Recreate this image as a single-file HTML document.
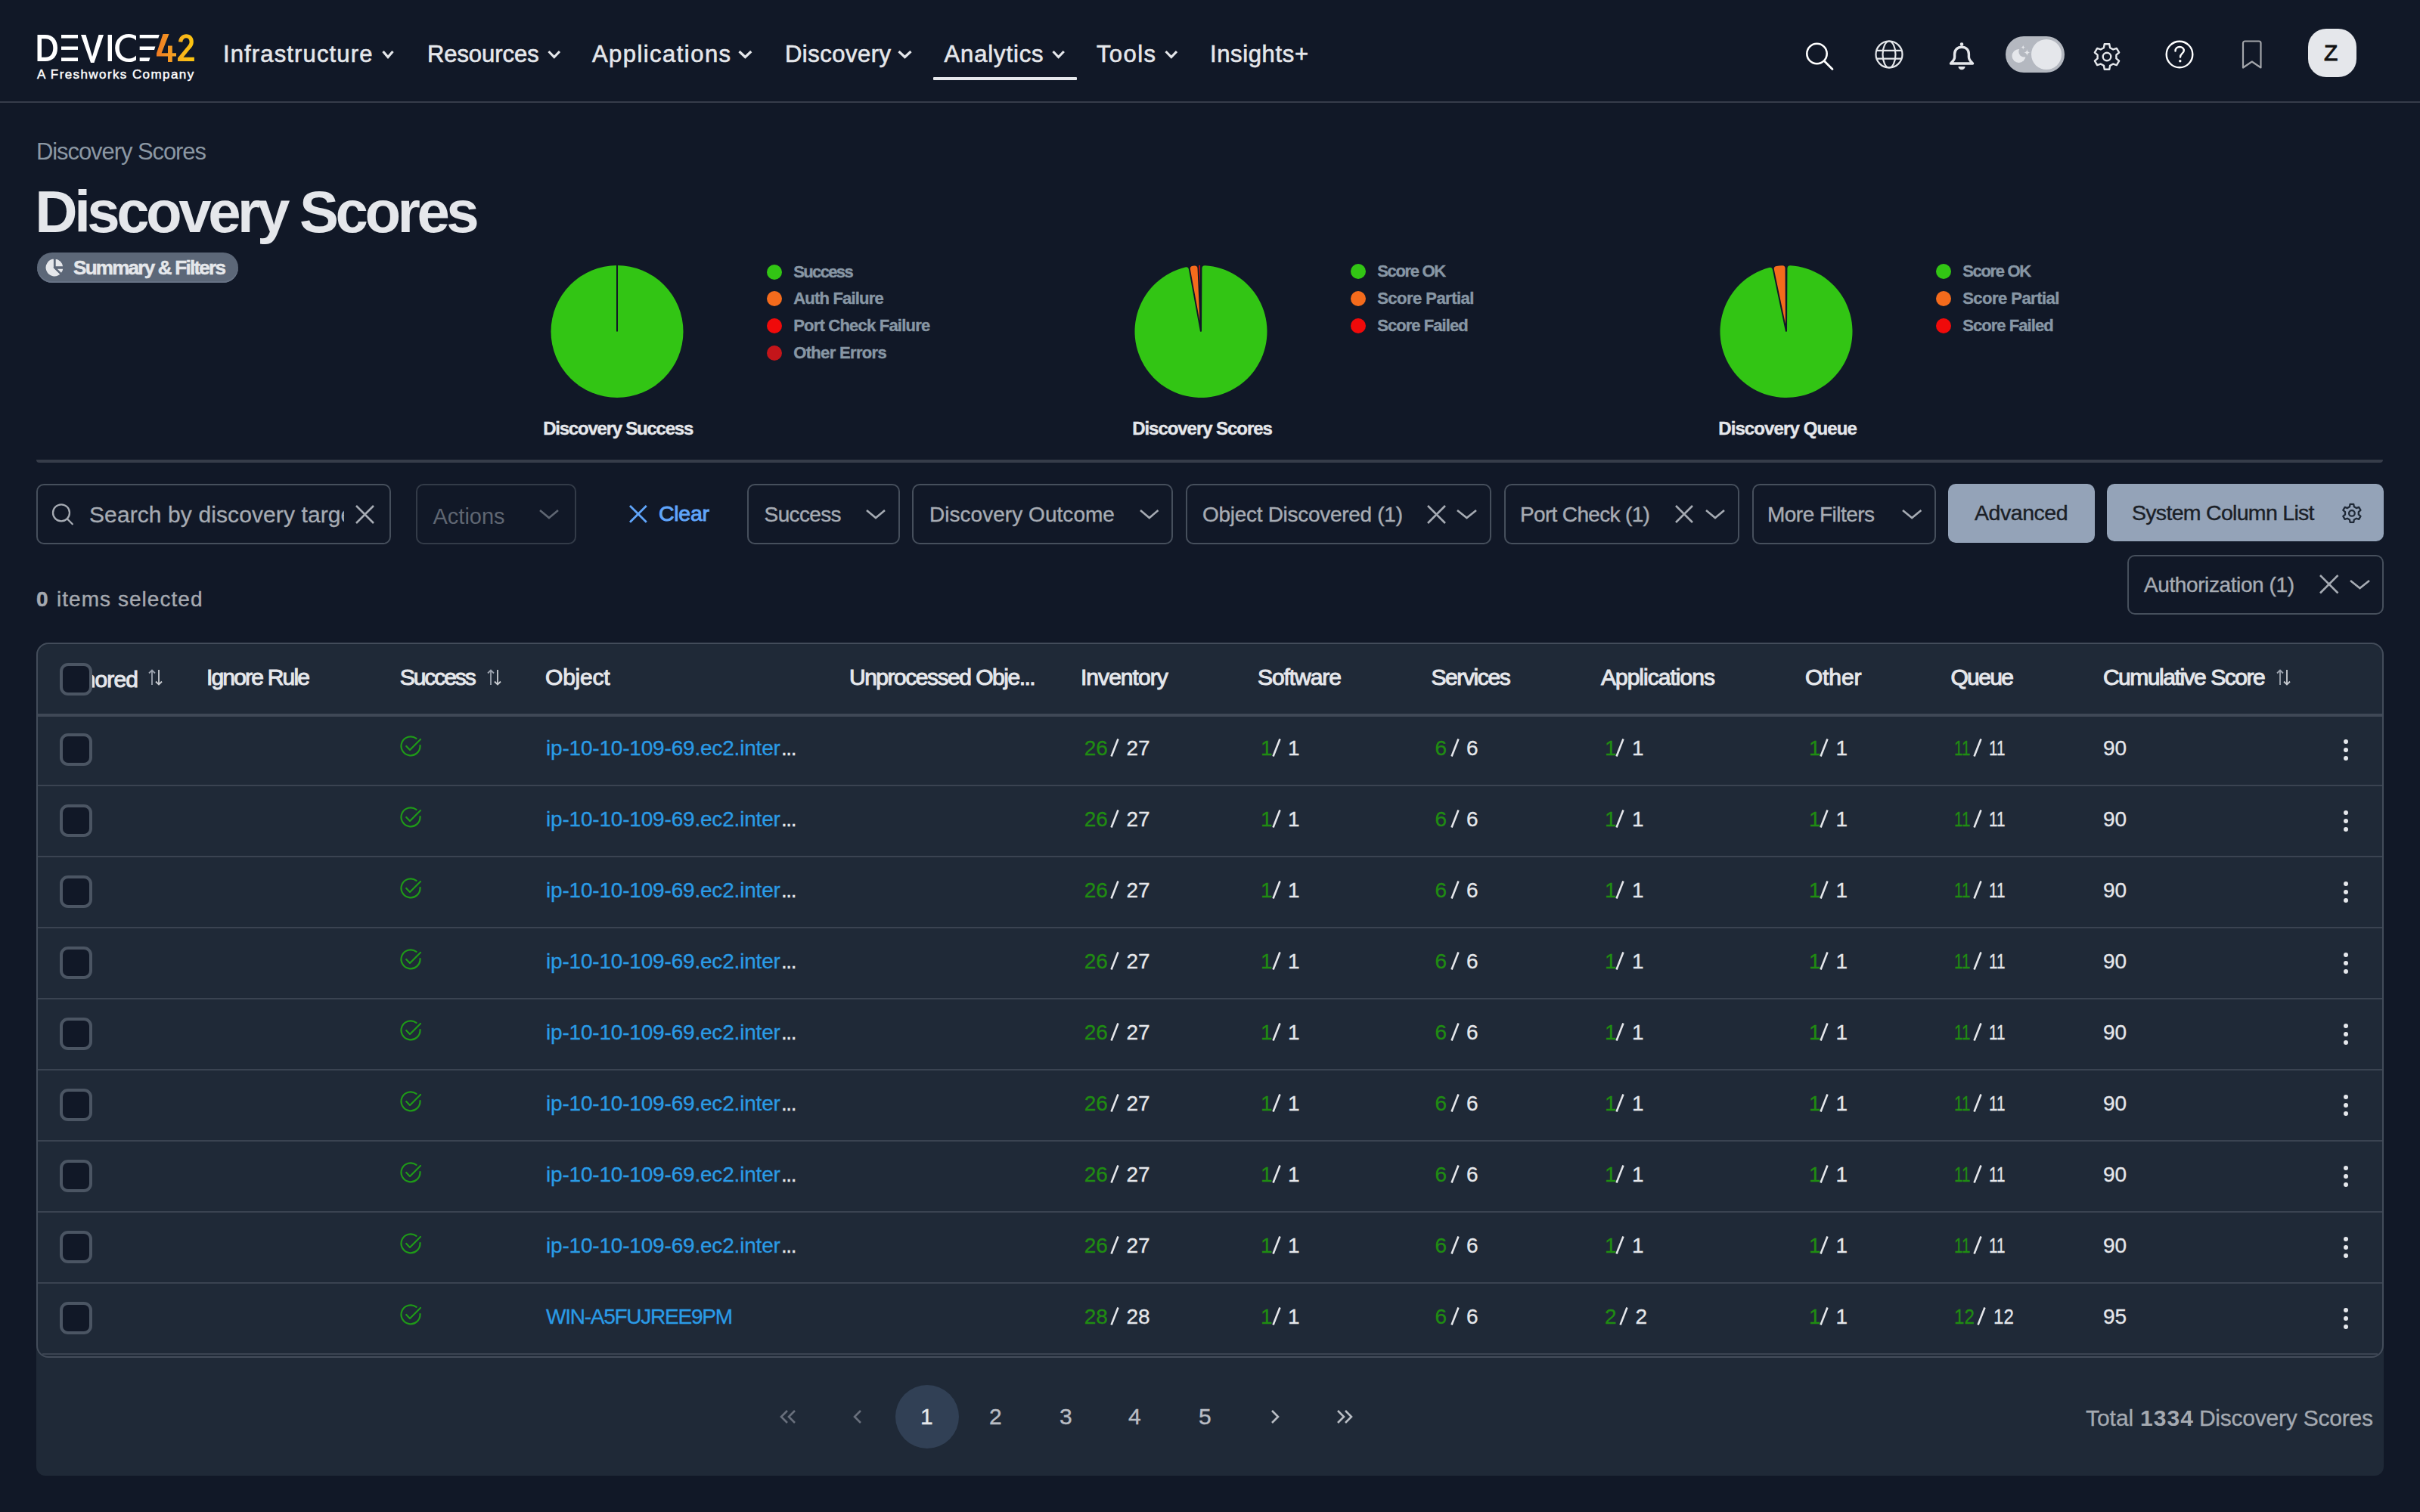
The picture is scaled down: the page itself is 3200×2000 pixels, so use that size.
<!DOCTYPE html>
<html><head><meta charset="utf-8"><style>
html,body{margin:0;padding:0;background:#111827;}
body{width:3200px;height:2000px;position:relative;overflow:hidden;font-family:"Liberation Sans", sans-serif;}
@media (max-width:2400px){html{zoom:0.5;}}
</style></head><body>
<div style="position:absolute;left:0px;top:134px;width:3200px;height:2px;background:#363c4a"></div>
<svg style="position:absolute;left:49px;top:45px;" width="212" height="40" viewBox="0 0 212 40">
<path d="M0.5,1 H11 C21,1 27,7.5 27,18.5 C27,29.5 21,36 11,36 H0.5 Z M6,6.2 V30.8 H11 C17.5,30.8 21.3,26 21.3,18.5 C21.3,11 17.5,6.2 11,6.2 Z" fill="#fff"/>
<rect x="32" y="1" width="22" height="4.6" fill="#fff"/>
<rect x="32" y="16.5" width="22" height="4.4" fill="#fff"/>
<rect x="32" y="31.3" width="22" height="4.7" fill="#fff"/>
<path d="M58,1 H64.5 L73,30 L81.5,1 H88 L75.5,38 H71 Z" fill="#fff"/>
<rect x="93.6" y="1" width="5.4" height="35" fill="#fff"/>
<path d="M131,8.6 C128.5,6 125,4.6 121.5,4.6 C113.5,4.6 108.8,10.6 108.8,18.5 C108.8,26.4 113.5,32.4 121.5,32.4 C125,32.4 128.5,31 131,28.4 V34.4 C128.5,36 125,37 121.5,37 C110.5,37 103.2,29.5 103.2,18.5 C103.2,7.5 110.5,0 121.5,0 C125,0 128.5,1 131,2.6 Z" fill="#fff"/>
<path d="M135.7,1 H161.8 L160.3,5.6 H135.7 Z" fill="#fff"/>
<path d="M135.7,16.5 H156.4 L155,20.9 H135.7 Z" fill="#fff"/>
<path d="M135.7,31.3 H149.5 L148,36 H135.7 Z" fill="#fff"/>
<defs><linearGradient id="lg4" x1="0" y1="0" x2="1" y2="0"><stop offset="0" stop-color="#f07a22"/><stop offset="1" stop-color="#f6a623"/></linearGradient>
<linearGradient id="lg2" x1="0" y1="0" x2="1" y2="0"><stop offset="0" stop-color="#f7ad1f"/><stop offset="1" stop-color="#fcc70f"/></linearGradient></defs>
<path d="M166.5,0 H174.5 L164.6,25.3 H173 V15.5 H178.8 V25.3 H184 V29.6 H178.8 V37 H173 V29.6 H158 V25.6 Z" fill="url(#lg4)"/>
<g transform="translate(186,0) scale(0.9,1) translate(-186.5,0)"><path d="M187.6,10.2 C188.4,4 193,0.3 199,0.3 C205.5,0.3 209.6,4.3 209.6,10.2 C209.6,14.5 207.5,17.5 203.5,21 L194.8,30.8 H210.8 V36 H186.5 V31.8 L199.5,17.6 C202.4,14.6 203.8,12.6 203.8,10.4 C203.8,7.1 201.8,5.3 199,5.3 C196,5.3 193.9,7.3 193.4,10.8 Z" fill="url(#lg2)"/></g>
</svg>
<div style="position:absolute;left:48.9px;top:90.4px;font-size:17px;line-height:17px;font-weight:400;color:#fff;white-space:pre;letter-spacing:1.41px;-webkit-text-stroke:0.45px #fff;">A Freshworks Company</div>
<div style="position:absolute;left:294.9px;top:56.2px;font-size:31px;line-height:31px;font-weight:400;color:#e5e7eb;white-space:pre;letter-spacing:1.15px;-webkit-text-stroke:0.6px #e5e7eb;">Infrastructure</div>
<svg style="position:absolute;left:505px;top:66px;" width="16" height="12" viewBox="0 0 16 12"><path d="M1.5,2 L8.0,9.5 L14.5,2" fill="none" stroke="#e5e7eb" stroke-width="3.2"/></svg>
<div style="position:absolute;left:564.9px;top:56.2px;font-size:31px;line-height:31px;font-weight:400;color:#e5e7eb;white-space:pre;letter-spacing:-0.05px;-webkit-text-stroke:0.6px #e5e7eb;">Resources</div>
<svg style="position:absolute;left:724px;top:66px;" width="17.5" height="12" viewBox="0 0 17.5 12"><path d="M1.5,2 L8.8,9.5 L16.0,2" fill="none" stroke="#e5e7eb" stroke-width="3.2"/></svg>
<div style="position:absolute;left:782.9px;top:56.2px;font-size:31px;line-height:31px;font-weight:400;color:#e5e7eb;white-space:pre;letter-spacing:1.46px;-webkit-text-stroke:0.6px #e5e7eb;">Applications</div>
<svg style="position:absolute;left:976px;top:66px;" width="18.799999999999955" height="12" viewBox="0 0 18.799999999999955 12"><path d="M1.5,2 L9.4,9.5 L17.3,2" fill="none" stroke="#e5e7eb" stroke-width="3.2"/></svg>
<div style="position:absolute;left:1037.9px;top:56.2px;font-size:31px;line-height:31px;font-weight:400;color:#e5e7eb;white-space:pre;letter-spacing:0.51px;-webkit-text-stroke:0.6px #e5e7eb;">Discovery</div>
<svg style="position:absolute;left:1187px;top:66px;" width="19" height="12" viewBox="0 0 19 12"><path d="M1.5,2 L9.5,9.5 L17.5,2" fill="none" stroke="#e5e7eb" stroke-width="3.2"/></svg>
<div style="position:absolute;left:1248.5px;top:56.2px;font-size:31px;line-height:31px;font-weight:400;color:#e5e7eb;white-space:pre;letter-spacing:0.88px;-webkit-text-stroke:0.6px #e5e7eb;">Analytics</div>
<svg style="position:absolute;left:1390.7px;top:66px;" width="17.299999999999955" height="12" viewBox="0 0 17.299999999999955 12"><path d="M1.5,2 L8.6,9.5 L15.8,2" fill="none" stroke="#e5e7eb" stroke-width="3.2"/></svg>
<div style="position:absolute;left:1449.9px;top:56.2px;font-size:31px;line-height:31px;font-weight:400;color:#e5e7eb;white-space:pre;letter-spacing:1.45px;-webkit-text-stroke:0.6px #e5e7eb;">Tools</div>
<svg style="position:absolute;left:1539.5px;top:66px;" width="17.5" height="12" viewBox="0 0 17.5 12"><path d="M1.5,2 L8.8,9.5 L16.0,2" fill="none" stroke="#e5e7eb" stroke-width="3.2"/></svg>
<div style="position:absolute;left:1599.9px;top:56.2px;font-size:31px;line-height:31px;font-weight:400;color:#e5e7eb;white-space:pre;letter-spacing:0.65px;-webkit-text-stroke:0.6px #e5e7eb;">Insights+</div>
<div style="position:absolute;left:1234px;top:102px;width:190px;height:4px;background:#e5e7eb;border-radius:1px"></div>
<svg style="position:absolute;left:2382px;top:50px;" width="48" height="48" viewBox="0 0 48 48"><circle cx="20.5" cy="21" r="13.2" fill="none" stroke="#fff" stroke-width="2.6"/><path d="M30.5,31 L41,41.5" stroke="#fff" stroke-width="2.8" stroke-linecap="round"/></svg>
<svg style="position:absolute;left:2474px;top:48px;" width="48" height="48" viewBox="0 0 48 48"><circle cx="24" cy="24" r="17.5" fill="none" stroke="#e5e7eb" stroke-width="2.2"/><ellipse cx="24" cy="24" rx="8.5" ry="17.5" fill="none" stroke="#e5e7eb" stroke-width="2.2"/><path d="M7,18.8 H41 M7,29.6 H41" stroke="#e5e7eb" stroke-width="2.2"/></svg>
<svg style="position:absolute;left:2574px;top:52px;" width="40" height="44" viewBox="0 0 40 44"><path d="M20,10.2 C14.5,10.2 10.6,13.8 10.6,19.5 V23.5 C10.6,26.5 8.5,29 5.5,32 H34.5 C31.5,29 29.4,26.5 29.4,23.5 V19.5 C29.4,13.8 25.5,10.2 20,10.2 Z" fill="none" stroke="#e5e7eb" stroke-width="3.4" stroke-linejoin="round"/><circle cx="20" cy="6.6" r="2.3" fill="#e5e7eb"/><path d="M15.5,36 H24.5 A4.5,4.3 0 0 1 15.5,36 Z" fill="#e5e7eb"/></svg>
<div style="position:absolute;left:2652px;top:48px;width:78px;height:48px;background:#b4b8c0;border-radius:24px"></div>
<svg style="position:absolute;left:2655px;top:52px;" width="34" height="40" viewBox="0 0 34 40"><circle cx="14.5" cy="22" r="9" fill="#e5e7eb"/><circle cx="21.6" cy="16.4" r="7.2" fill="#b4b8c0"/><path d="M20.2,7.199999999999999 Q20.2,10.6 23.599999999999998,10.6 Q20.2,10.6 20.2,14.0 Q20.2,10.6 16.8,10.6 Q20.2,10.6 20.2,7.199999999999999 Z" fill="#e5e7eb"/><path d="M25.4,12.7 Q25.4,17.5 30.2,17.5 Q25.4,17.5 25.4,22.3 Q25.4,17.5 20.599999999999998,17.5 Q25.4,17.5 25.4,12.7 Z" fill="#e5e7eb"/></svg>
<div style="position:absolute;left:2686px;top:52px;width:40px;height:40px;background:#e5e7eb;border-radius:50%"></div>
<svg style="position:absolute;left:2766px;top:55px;" width="40" height="40" viewBox="0 0 40 40"><path d="M16.76,3.31 L23.24,3.31 L24.10,8.09 L28.27,10.49 L32.83,8.85 L36.07,14.47 L32.37,17.60 L32.37,22.40 L36.07,25.53 L32.83,31.15 L28.27,29.51 L24.10,31.91 L23.24,36.69 L16.76,36.69 L15.90,31.91 L11.73,29.51 L7.17,31.15 L3.93,25.53 L7.63,22.40 L7.63,17.60 L3.93,14.47 L7.17,8.85 L11.73,10.49 L15.90,8.09 Z" fill="none" stroke="#e5e7eb" stroke-width="2.4" stroke-linejoin="round"/><circle cx="20" cy="20" r="5.3" fill="none" stroke="#e5e7eb" stroke-width="2.4"/></svg>
<svg style="position:absolute;left:2862px;top:52px;" width="40" height="40" viewBox="0 0 40 40"><circle cx="20" cy="20" r="17.3" fill="none" stroke="#fff" stroke-width="2.4"/><path d="M14.5,15.5 C14.5,12 17,10 20.2,10 C23.5,10 25.8,12 25.8,15 C25.8,18.6 21,19 21,23.5" fill="none" stroke="#fff" stroke-width="2.4" stroke-linecap="round"/><circle cx="20.8" cy="28.8" r="1.7" fill="#fff"/></svg>
<svg style="position:absolute;left:2962px;top:52px;" width="32" height="42" viewBox="0 0 32 42"><path d="M4,37.5 V5 A2.5,2.5 0 0 1 6.5,2.5 H25 A2.5,2.5 0 0 1 27.5,5 V37.5 L15.8,29.5 Z" fill="none" stroke="#a3a5aa" stroke-width="2.2" stroke-linejoin="round"/></svg>
<div style="position:absolute;left:3052px;top:38px;width:64px;height:64px;background:#e5e7eb;border-radius:24px"></div>
<div style="position:absolute;left:3072.9px;top:54.6px;font-size:30px;line-height:30px;font-weight:400;color:#111;white-space:pre;-webkit-text-stroke:0.8px #111;">Z</div>
<div style="position:absolute;left:47.9px;top:185.4px;font-size:31px;line-height:31px;font-weight:400;color:#8b97a3;white-space:pre;letter-spacing:-1.07px;">Discovery Scores</div>
<div style="position:absolute;left:46.3px;top:240.6px;font-size:78px;line-height:78px;font-weight:700;color:#e5e7eb;white-space:pre;letter-spacing:-4.49px;">Discovery Scores</div>
<div style="position:absolute;left:49px;top:334px;width:266px;height:40px;background:#5c6778;border-radius:20px;box-shadow:inset 0 -2px 0 #687386"></div>
<svg style="position:absolute;left:58px;top:339.5px;" width="28" height="28" viewBox="0 0 28 28"><g stroke="#5c6778" stroke-width="2.2" stroke-linejoin="miter" fill="#e5e7eb"><path d="M14,14 L14,1.5 A12.5,12.5 0 1 0 22.84,22.84 Z"/><path d="M14.6,13.4 L14.6,1.5 A12.5,12.5 0 0 1 26.5,13.4 Z"/><path d="M15,14.6 L26.5,14.6 A12.5,12.5 0 0 1 23.2,22.6 Z"/></g></svg>
<div style="position:absolute;left:97.1px;top:341.0px;font-size:26px;line-height:26px;font-weight:700;color:#e5e7eb;white-space:pre;letter-spacing:-1.75px;-webkit-text-stroke:0.5px #e5e7eb;">Summary &amp; Filters</div>
<svg style="position:absolute;left:716px;top:338px;" width="200" height="200" viewBox="0 0 200 200"><circle cx="100" cy="100.5" r="87.5" fill="#32c514"/><path d="M100,12 V100.5" stroke="#111827" stroke-width="2"/></svg>
<svg style="position:absolute;left:1488px;top:338px;" width="200" height="200" viewBox="0 0 200 200"><path d="M101.00,100.51 L101.44,17.01 Q101.46,13.01 105.45,13.17 A87.5,87.5 0 1 1 79.32,15.48 Q83.22,14.62 83.94,18.56 L99.02,100.68 Z" fill="#32c514"/><path d="M98.40,86.25 L85.91,18.20 Q85.19,14.26 89.15,13.68 A87.5,87.5 0 0 1 91.35,13.43 Q95.34,13.12 95.50,17.12 Z" fill="#f46b1c"/><path d="M98.48,42.52 L97.40,13.04 A87.5,87.5 0 0 1 98.93,13.01 Z" fill="#f00a0a"/></svg>
<svg style="position:absolute;left:2262px;top:338px;" width="200" height="200" viewBox="0 0 200 200"><path d="M101.00,100.51 L101.44,17.01 Q101.46,13.01 105.45,13.17 A87.5,87.5 0 1 1 77.24,16.01 Q81.13,15.06 81.95,18.97 L99.02,100.70 Z" fill="#32c514"/><path d="M98.95,90.57 L83.90,18.57 Q83.09,14.65 87.03,13.97 A87.5,87.5 0 0 1 94.55,13.17 Q98.54,13.01 98.56,17.01 Z" fill="#f46b1c"/></svg>
<div style="position:absolute;left:1014px;top:349.5px;width:20px;height:20px;background:#32c514;border-radius:50%"></div>
<div style="position:absolute;left:1049.2px;top:348.9px;font-size:22px;line-height:22px;font-weight:700;color:#8796a4;white-space:pre;letter-spacing:-1.63px;-webkit-text-stroke:0.4px #8796a4;">Success</div>
<div style="position:absolute;left:1014px;top:385px;width:20px;height:20px;background:#f46b1c;border-radius:50%"></div>
<div style="position:absolute;left:1049.2px;top:384.4px;font-size:22px;line-height:22px;font-weight:700;color:#8796a4;white-space:pre;letter-spacing:-0.80px;-webkit-text-stroke:0.4px #8796a4;">Auth Failure</div>
<div style="position:absolute;left:1014px;top:420.7px;width:20px;height:20px;background:#f00a0a;border-radius:50%"></div>
<div style="position:absolute;left:1049.2px;top:420.1px;font-size:22px;line-height:22px;font-weight:700;color:#8796a4;white-space:pre;letter-spacing:-0.79px;-webkit-text-stroke:0.4px #8796a4;">Port Check Failure</div>
<div style="position:absolute;left:1014px;top:457px;width:20px;height:20px;background:#c4151a;border-radius:50%"></div>
<div style="position:absolute;left:1049.2px;top:456.4px;font-size:22px;line-height:22px;font-weight:700;color:#8796a4;white-space:pre;letter-spacing:-0.66px;-webkit-text-stroke:0.4px #8796a4;">Other Errors</div>
<div style="position:absolute;left:1786px;top:349px;width:20px;height:20px;background:#32c514;border-radius:50%"></div>
<div style="position:absolute;left:1821.2px;top:348.4px;font-size:22px;line-height:22px;font-weight:700;color:#8796a4;white-space:pre;letter-spacing:-1.32px;-webkit-text-stroke:0.4px #8796a4;">Score OK</div>
<div style="position:absolute;left:1786px;top:385px;width:20px;height:20px;background:#f46b1c;border-radius:50%"></div>
<div style="position:absolute;left:1821.2px;top:384.4px;font-size:22px;line-height:22px;font-weight:700;color:#8796a4;white-space:pre;letter-spacing:-0.53px;-webkit-text-stroke:0.4px #8796a4;">Score Partial</div>
<div style="position:absolute;left:1786px;top:421px;width:20px;height:20px;background:#f00a0a;border-radius:50%"></div>
<div style="position:absolute;left:1821.2px;top:420.4px;font-size:22px;line-height:22px;font-weight:700;color:#8796a4;white-space:pre;letter-spacing:-0.94px;-webkit-text-stroke:0.4px #8796a4;">Score Failed</div>
<div style="position:absolute;left:2560px;top:349px;width:20px;height:20px;background:#32c514;border-radius:50%"></div>
<div style="position:absolute;left:2595.2px;top:348.4px;font-size:22px;line-height:22px;font-weight:700;color:#8796a4;white-space:pre;letter-spacing:-1.32px;-webkit-text-stroke:0.4px #8796a4;">Score OK</div>
<div style="position:absolute;left:2560px;top:385px;width:20px;height:20px;background:#f46b1c;border-radius:50%"></div>
<div style="position:absolute;left:2595.2px;top:384.4px;font-size:22px;line-height:22px;font-weight:700;color:#8796a4;white-space:pre;letter-spacing:-0.53px;-webkit-text-stroke:0.4px #8796a4;">Score Partial</div>
<div style="position:absolute;left:2560px;top:421px;width:20px;height:20px;background:#f00a0a;border-radius:50%"></div>
<div style="position:absolute;left:2595.2px;top:420.4px;font-size:22px;line-height:22px;font-weight:700;color:#8796a4;white-space:pre;letter-spacing:-0.94px;-webkit-text-stroke:0.4px #8796a4;">Score Failed</div>
<div style="position:absolute;left:718.2px;top:555.4px;font-size:24px;line-height:24px;font-weight:700;color:#e5e7eb;white-space:pre;letter-spacing:-1.23px;-webkit-text-stroke:0.4px #e5e7eb;">Discovery Success</div>
<div style="position:absolute;left:1497.2px;top:555.4px;font-size:24px;line-height:24px;font-weight:700;color:#e5e7eb;white-space:pre;letter-spacing:-1.05px;-webkit-text-stroke:0.4px #e5e7eb;">Discovery Scores</div>
<div style="position:absolute;left:2272.2px;top:555.1px;font-size:24px;line-height:24px;font-weight:700;color:#e5e7eb;white-space:pre;letter-spacing:-0.89px;-webkit-text-stroke:0.4px #e5e7eb;">Discovery Queue</div>
<div style="position:absolute;left:48px;top:608px;width:3103px;height:4px;background:#363c49;border-radius:0 0 5px 5px"></div>
<div style="position:absolute;left:48px;top:640px;width:469px;height:80px;box-sizing:border-box;border:2px solid #464f5c;border-radius:10px;background:transparent"></div>
<svg style="position:absolute;left:66px;top:664px;" width="34" height="34" viewBox="0 0 34 34"><circle cx="15" cy="14.3" r="11" fill="none" stroke="#a6abb3" stroke-width="2.3"/><path d="M22.8,22.3 L29.8,29.3" stroke="#a6abb3" stroke-width="2.3" stroke-linecap="round"/></svg>
<div style="position:absolute;left:118px;top:660px;width:337px;height:45px;overflow:hidden"><div style="position:absolute;left:0;top:6px;font-size:30px;line-height:30px;color:#a6abb3;white-space:pre;letter-spacing:0.1px;-webkit-text-stroke:0.3px #a6abb3">Search by discovery target</div></div>
<svg style="position:absolute;left:469px;top:666.5px;" width="27" height="27" viewBox="0 0 27 27"><path d="M2,2 L25.0,25.0 M25.0,2 L2,25.0" fill="none" stroke="#a6abb3" stroke-width="2.6"/></svg>
<div style="position:absolute;left:550px;top:640px;width:212px;height:80px;box-sizing:border-box;border:2px solid #333b48;border-radius:10px;background:transparent"></div>
<div style="position:absolute;left:572.5px;top:668.5px;font-size:29px;line-height:29px;font-weight:400;color:#5f6672;white-space:pre;">Actions</div>
<svg style="position:absolute;left:712px;top:671px;" width="28" height="18" viewBox="0 0 28 18"><path d="M2,4 L14.0,14 L26.0,4" fill="none" stroke="#5f6672" stroke-width="2.6"/></svg>
<svg style="position:absolute;left:831.4px;top:667.0999999999999px;" width="25.800000000000068" height="25.800000000000068" viewBox="0 0 25.800000000000068 25.800000000000068"><path d="M2,2 L23.8,23.8 M23.8,2 L2,23.8" fill="none" stroke="#60a5fa" stroke-width="2.8"/></svg>
<div style="position:absolute;left:871.0px;top:664.5px;font-size:28.5px;line-height:28.5px;font-weight:400;color:#60a5fa;white-space:pre;letter-spacing:-0.28px;-webkit-text-stroke:0.9px #60a5fa;">Clear</div>
<div style="position:absolute;left:988px;top:640px;width:202px;height:80px;box-sizing:border-box;border:2px solid #464f5c;border-radius:10px;background:transparent"></div>
<div style="position:absolute;left:1010.6px;top:666.5px;font-size:28px;line-height:28px;font-weight:400;color:#a6abb3;white-space:pre;letter-spacing:-0.64px;-webkit-text-stroke:0.4px #a6abb3;">Success</div>
<svg style="position:absolute;left:1144px;top:671px;" width="28" height="18" viewBox="0 0 28 18"><path d="M2,4 L14.0,14 L26.0,4" fill="none" stroke="#a6abb3" stroke-width="2.6"/></svg>
<div style="position:absolute;left:1206px;top:640px;width:345px;height:80px;box-sizing:border-box;border:2px solid #464f5c;border-radius:10px;background:transparent"></div>
<div style="position:absolute;left:1229.0px;top:666.5px;font-size:28px;line-height:28px;font-weight:400;color:#a6abb3;white-space:pre;letter-spacing:0.04px;-webkit-text-stroke:0.4px #a6abb3;">Discovery Outcome</div>
<svg style="position:absolute;left:1505.5px;top:671px;" width="27.5" height="18" viewBox="0 0 27.5 18"><path d="M2,4 L13.8,14 L25.5,4" fill="none" stroke="#a6abb3" stroke-width="2.6"/></svg>
<div style="position:absolute;left:1568px;top:640px;width:404px;height:80px;box-sizing:border-box;border:2px solid #464f5c;border-radius:10px;background:transparent"></div>
<div style="position:absolute;left:1590.0px;top:666.5px;font-size:28px;line-height:28px;font-weight:400;color:#a6abb3;white-space:pre;letter-spacing:-0.29px;-webkit-text-stroke:0.4px #a6abb3;">Object Discovered (1)</div>
<svg style="position:absolute;left:1886px;top:666.5px;" width="27" height="27" viewBox="0 0 27 27"><path d="M2,2 L25.0,25.0 M25.0,2 L2,25.0" fill="none" stroke="#a6abb3" stroke-width="2.6"/></svg>
<svg style="position:absolute;left:1925px;top:671px;" width="29" height="18" viewBox="0 0 29 18"><path d="M2,4 L14.5,14 L27.0,4" fill="none" stroke="#a6abb3" stroke-width="2.6"/></svg>
<div style="position:absolute;left:1989px;top:640px;width:311px;height:80px;box-sizing:border-box;border:2px solid #464f5c;border-radius:10px;background:transparent"></div>
<div style="position:absolute;left:2010.0px;top:666.5px;font-size:28px;line-height:28px;font-weight:400;color:#a6abb3;white-space:pre;letter-spacing:-0.66px;-webkit-text-stroke:0.4px #a6abb3;">Port Check (1)</div>
<svg style="position:absolute;left:2214px;top:667.0px;" width="26" height="26" viewBox="0 0 26 26"><path d="M2,2 L24.0,24.0 M24.0,2 L2,24.0" fill="none" stroke="#a6abb3" stroke-width="2.6"/></svg>
<svg style="position:absolute;left:2254px;top:671px;" width="28" height="18" viewBox="0 0 28 18"><path d="M2,4 L14.0,14 L26.0,4" fill="none" stroke="#a6abb3" stroke-width="2.6"/></svg>
<div style="position:absolute;left:2317px;top:640px;width:243px;height:80px;box-sizing:border-box;border:2px solid #464f5c;border-radius:10px;background:transparent"></div>
<div style="position:absolute;left:2337.0px;top:666.5px;font-size:28px;line-height:28px;font-weight:400;color:#a6abb3;white-space:pre;letter-spacing:-0.53px;-webkit-text-stroke:0.4px #a6abb3;">More Filters</div>
<svg style="position:absolute;left:2513.6px;top:671px;" width="28.40000000000009" height="18" viewBox="0 0 28.40000000000009 18"><path d="M2,4 L14.2,14 L26.4,4" fill="none" stroke="#a6abb3" stroke-width="2.6"/></svg>
<div style="position:absolute;left:2576px;top:640px;width:194px;height:78px;background:#94a3b8;border-radius:10px"></div>
<div style="position:absolute;left:2611.0px;top:664.4px;font-size:28.5px;line-height:28.5px;font-weight:400;color:#1b1f27;white-space:pre;letter-spacing:-0.45px;-webkit-text-stroke:0.4px #1b1f27;">Advanced</div>
<div style="position:absolute;left:2786px;top:640px;width:366px;height:76px;background:#94a3b8;border-radius:10px"></div>
<div style="position:absolute;left:2819.0px;top:664.4px;font-size:28.5px;line-height:28.5px;font-weight:400;color:#1b1f27;white-space:pre;letter-spacing:-0.70px;-webkit-text-stroke:0.4px #1b1f27;">System Column List</div>
<svg style="position:absolute;left:3094px;top:663px;" width="32" height="32" viewBox="0 0 32 32"><path d="M16.76,3.31 L23.24,3.31 L24.10,8.09 L28.27,10.49 L32.83,8.85 L36.07,14.47 L32.37,17.60 L32.37,22.40 L36.07,25.53 L32.83,31.15 L28.27,29.51 L24.10,31.91 L23.24,36.69 L16.76,36.69 L15.90,31.91 L11.73,29.51 L7.17,31.15 L3.93,25.53 L7.63,22.40 L7.63,17.60 L3.93,14.47 L7.17,8.85 L11.73,10.49 L15.90,8.09 Z" transform="translate(1.5,1.5) scale(0.72)" fill="none" stroke="#1f2937" stroke-width="3.2" stroke-linejoin="round"/><circle cx="15.9" cy="15.9" r="3.8" fill="none" stroke="#1f2937" stroke-width="2.3"/></svg>
<div style="position:absolute;left:2813px;top:734px;width:339px;height:79px;box-sizing:border-box;border:2px solid #464f5c;border-radius:10px;background:transparent"></div>
<div style="position:absolute;left:2835.0px;top:760.3px;font-size:28px;line-height:28px;font-weight:400;color:#a6abb3;white-space:pre;letter-spacing:-0.40px;-webkit-text-stroke:0.4px #a6abb3;">Authorization (1)</div>
<svg style="position:absolute;left:3066px;top:759.25px;" width="27.5" height="27.5" viewBox="0 0 27.5 27.5"><path d="M2,2 L25.5,25.5 M25.5,2 L2,25.5" fill="none" stroke="#a6abb3" stroke-width="2.6"/></svg>
<svg style="position:absolute;left:3106px;top:764px;" width="29" height="18" viewBox="0 0 29 18"><path d="M2,4 L14.5,14 L27.0,4" fill="none" stroke="#a6abb3" stroke-width="2.6"/></svg>
<div style="position:absolute;left:48.0px;top:778.8px;font-size:28px;line-height:28px;font-weight:700;color:#a5a9b0;white-space:pre;-webkit-text-stroke:0.5px #a5a9b0;">0</div>
<div style="position:absolute;left:75.0px;top:778.8px;font-size:28px;line-height:28px;font-weight:400;color:#a5a9b0;white-space:pre;letter-spacing:1.04px;-webkit-text-stroke:0.4px #a5a9b0;">items selected</div>
<div style="position:absolute;left:48px;top:850px;width:3104px;height:1102px;background:#1f2937;border-radius:16px 16px 12px 12px"></div>
<div style="position:absolute;left:48px;top:850px;width:3104px;height:946px;box-sizing:border-box;border:2px solid #434c5a;border-radius:16px;"></div>
<div style="position:absolute;left:50px;top:944px;width:3100px;height:4px;background:#3f4856"></div>
<div style="position:absolute;left:50px;top:1038px;width:3100px;height:2px;background:#3a4351"></div>
<div style="position:absolute;left:50px;top:1132px;width:3100px;height:2px;background:#3a4351"></div>
<div style="position:absolute;left:50px;top:1226px;width:3100px;height:2px;background:#3a4351"></div>
<div style="position:absolute;left:50px;top:1320px;width:3100px;height:2px;background:#3a4351"></div>
<div style="position:absolute;left:50px;top:1414px;width:3100px;height:2px;background:#3a4351"></div>
<div style="position:absolute;left:50px;top:1508px;width:3100px;height:2px;background:#3a4351"></div>
<div style="position:absolute;left:50px;top:1602px;width:3100px;height:2px;background:#3a4351"></div>
<div style="position:absolute;left:50px;top:1696px;width:3100px;height:2px;background:#3a4351"></div>
<div style="position:absolute;left:56px;top:1790px;width:3088px;height:2px;background:#3a4351"></div>
<div style="position:absolute;left:100px;top:870px;width:82px;height:50px;overflow:hidden"><div style="position:absolute;right:0;top:14px;font-size:30px;line-height:30px;font-weight:400;-webkit-text-stroke:1px #e5e7eb;color:#e5e7eb;white-space:pre;letter-spacing:-0.9px">Ignored</div></div>
<svg style="position:absolute;left:195px;top:884.2px;" width="22" height="26" viewBox="0 0 22 26"><path d="M6,22 V2.5 M2,6.5 L6,2.5 L10,6.5" fill="none" stroke="#9ca3af" stroke-width="1.8"/><path d="M15,2 V21.5 M11,17.5 L15,21.5 L19,17.5" fill="none" stroke="#c9ccd1" stroke-width="1.8"/></svg>
<div style="position:absolute;left:272.9px;top:880.8px;font-size:30px;line-height:30px;font-weight:400;color:#e5e7eb;white-space:pre;letter-spacing:-1.80px;-webkit-text-stroke:1.0px #e5e7eb;">Ignore Rule</div>
<div style="position:absolute;left:528.7px;top:880.8px;font-size:30px;line-height:30px;font-weight:400;color:#e5e7eb;white-space:pre;letter-spacing:-2.05px;-webkit-text-stroke:1.0px #e5e7eb;">Success</div>
<svg style="position:absolute;left:643px;top:884.2px;" width="22" height="26" viewBox="0 0 22 26"><path d="M6,22 V2.5 M2,6.5 L6,2.5 L10,6.5" fill="none" stroke="#9ca3af" stroke-width="1.8"/><path d="M15,2 V21.5 M11,17.5 L15,21.5 L19,17.5" fill="none" stroke="#c9ccd1" stroke-width="1.8"/></svg>
<div style="position:absolute;left:721.0px;top:880.8px;font-size:30px;line-height:30px;font-weight:400;color:#e5e7eb;white-space:pre;letter-spacing:-0.20px;-webkit-text-stroke:1.0px #e5e7eb;">Object</div>
<div style="position:absolute;left:1123.0px;top:880.8px;font-size:30px;line-height:30px;font-weight:400;color:#e5e7eb;white-space:pre;letter-spacing:-1.49px;-webkit-text-stroke:1.0px #e5e7eb;">Unprocessed Obje...</div>
<div style="position:absolute;left:1429.0px;top:880.8px;font-size:30px;line-height:30px;font-weight:400;color:#e5e7eb;white-space:pre;letter-spacing:-0.96px;-webkit-text-stroke:1.0px #e5e7eb;">Inventory</div>
<div style="position:absolute;left:1663.0px;top:880.8px;font-size:30px;line-height:30px;font-weight:400;color:#e5e7eb;white-space:pre;letter-spacing:-1.08px;-webkit-text-stroke:1.0px #e5e7eb;">Software</div>
<div style="position:absolute;left:1892.4px;top:880.8px;font-size:30px;line-height:30px;font-weight:400;color:#e5e7eb;white-space:pre;letter-spacing:-1.38px;-webkit-text-stroke:1.0px #e5e7eb;">Services</div>
<div style="position:absolute;left:2116.9px;top:880.8px;font-size:30px;line-height:30px;font-weight:400;color:#e5e7eb;white-space:pre;letter-spacing:-0.97px;-webkit-text-stroke:1.0px #e5e7eb;">Applications</div>
<div style="position:absolute;left:2386.9px;top:880.8px;font-size:30px;line-height:30px;font-weight:400;color:#e5e7eb;white-space:pre;letter-spacing:-0.11px;-webkit-text-stroke:1.0px #e5e7eb;">Other</div>
<div style="position:absolute;left:2579.4px;top:880.8px;font-size:30px;line-height:30px;font-weight:400;color:#e5e7eb;white-space:pre;letter-spacing:-1.62px;-webkit-text-stroke:1.0px #e5e7eb;">Queue</div>
<div style="position:absolute;left:2780.9px;top:880.8px;font-size:30px;line-height:30px;font-weight:400;color:#e5e7eb;white-space:pre;letter-spacing:-1.46px;-webkit-text-stroke:1.0px #e5e7eb;">Cumulative Score</div>
<svg style="position:absolute;left:3009px;top:884.2px;" width="22" height="26" viewBox="0 0 22 26"><path d="M6,22 V2.5 M2,6.5 L6,2.5 L10,6.5" fill="none" stroke="#9ca3af" stroke-width="1.8"/><path d="M15,2 V21.5 M11,17.5 L15,21.5 L19,17.5" fill="none" stroke="#c9ccd1" stroke-width="1.8"/></svg>
<div style="position:absolute;left:78.5px;top:876.5px;width:43px;height:43px;box-sizing:border-box;border:4px solid #4b5563;border-radius:11px;background:#111827"></div>
<div style="position:absolute;left:78.5px;top:970px;width:43px;height:43px;box-sizing:border-box;border:4px solid #4b5563;border-radius:11px;background:#111827"></div>
<svg style="position:absolute;left:528.5px;top:971.7px;" width="32" height="32" viewBox="0 0 32 32"><path d="M26.5,14 A12.5,12.5 0 1 1 21.5,4.8" fill="none" stroke="#1f9a18" stroke-width="2.2" stroke-linecap="round"/><path d="M8.2,15 L13,20 L27,6" fill="none" stroke="#1f9a18" stroke-width="2.2" stroke-linecap="round" stroke-linejoin="round"/></svg>
<div style="position:absolute;left:722.0px;top:976.3px;font-size:28px;line-height:28px;font-weight:400;color:#2a9be6;white-space:pre;letter-spacing:-0.19px;-webkit-text-stroke:0.3px #2a9be6;">ip-10-10-109-69.ec2.inter</div>
<div style="position:absolute;left:1033.0px;top:976.3px;font-size:28px;line-height:28px;font-weight:400;color:#e5e7eb;white-space:pre;letter-spacing:-1.44px;-webkit-text-stroke:0.3px #e5e7eb;">...</div>
<div style="position:absolute;left:1433.7px;top:976.3px;font-size:28px;line-height:28px;font-weight:400;color:#1f8c12;white-space:pre;-webkit-text-stroke:0.3px #1f8c12;">26</div>
<svg style="position:absolute;left:1467px;top:976.0px;" width="14" height="26" viewBox="0 0 14 26"><path d="M2.5,24.5 L11.5,1.5" stroke="#e5e7eb" stroke-width="2.6"/></svg>
<div style="position:absolute;left:1489.5px;top:976.3px;font-size:28px;line-height:28px;font-weight:400;color:#e5e7eb;white-space:pre;-webkit-text-stroke:0.3px #e5e7eb;">27</div>
<div style="position:absolute;left:1667.0px;top:976.3px;font-size:28px;line-height:28px;font-weight:400;color:#1f8c12;white-space:pre;-webkit-text-stroke:0.3px #1f8c12;">1</div>
<svg style="position:absolute;left:1680.5px;top:976.0px;" width="14" height="26" viewBox="0 0 14 26"><path d="M2.5,24.5 L11.5,1.5" stroke="#e5e7eb" stroke-width="2.6"/></svg>
<div style="position:absolute;left:1703.0px;top:976.3px;font-size:28px;line-height:28px;font-weight:400;color:#e5e7eb;white-space:pre;-webkit-text-stroke:0.3px #e5e7eb;">1</div>
<div style="position:absolute;left:1897.6px;top:976.3px;font-size:28px;line-height:28px;font-weight:400;color:#1f8c12;white-space:pre;-webkit-text-stroke:0.3px #1f8c12;">6</div>
<svg style="position:absolute;left:1916.5px;top:976.0px;" width="14" height="26" viewBox="0 0 14 26"><path d="M2.5,24.5 L11.5,1.5" stroke="#e5e7eb" stroke-width="2.6"/></svg>
<div style="position:absolute;left:1939.0px;top:976.3px;font-size:28px;line-height:28px;font-weight:400;color:#e5e7eb;white-space:pre;-webkit-text-stroke:0.3px #e5e7eb;">6</div>
<div style="position:absolute;left:2122.0px;top:976.3px;font-size:28px;line-height:28px;font-weight:400;color:#1f8c12;white-space:pre;-webkit-text-stroke:0.3px #1f8c12;">1</div>
<svg style="position:absolute;left:2135.4px;top:976.0px;" width="14" height="26" viewBox="0 0 14 26"><path d="M2.5,24.5 L11.5,1.5" stroke="#e5e7eb" stroke-width="2.6"/></svg>
<div style="position:absolute;left:2157.9px;top:976.3px;font-size:28px;line-height:28px;font-weight:400;color:#e5e7eb;white-space:pre;-webkit-text-stroke:0.3px #e5e7eb;">1</div>
<div style="position:absolute;left:2392.0px;top:976.3px;font-size:28px;line-height:28px;font-weight:400;color:#1f8c12;white-space:pre;-webkit-text-stroke:0.3px #1f8c12;">1</div>
<svg style="position:absolute;left:2405px;top:976.0px;" width="14" height="26" viewBox="0 0 14 26"><path d="M2.5,24.5 L11.5,1.5" stroke="#e5e7eb" stroke-width="2.6"/></svg>
<div style="position:absolute;left:2427.5px;top:976.3px;font-size:28px;line-height:28px;font-weight:400;color:#e5e7eb;white-space:pre;-webkit-text-stroke:0.3px #e5e7eb;">1</div>
<div style="position:absolute;left:2584.0px;top:976.3px;font-size:28px;line-height:28px;font-weight:400;color:#1f8c12;white-space:pre;transform:scaleX(0.74);transform-origin:0 0;-webkit-text-stroke:0.3px #1f8c12;">11</div>
<svg style="position:absolute;left:2607.7px;top:976.0px;" width="14" height="26" viewBox="0 0 14 26"><path d="M2.5,24.5 L11.5,1.5" stroke="#e5e7eb" stroke-width="2.6"/></svg>
<div style="position:absolute;left:2630.2px;top:976.3px;font-size:28px;line-height:28px;font-weight:400;color:#e5e7eb;white-space:pre;transform:scaleX(0.74);transform-origin:0 0;-webkit-text-stroke:0.3px #e5e7eb;">11</div>
<div style="position:absolute;left:2781.0px;top:976.3px;font-size:28px;line-height:28px;font-weight:400;color:#e5e7eb;white-space:pre;-webkit-text-stroke:0.3px #e5e7eb;">90</div>
<div style="position:absolute;left:3099px;top:977.6px;width:6px;height:6px;background:#e5e7eb;border-radius:50%"></div>
<div style="position:absolute;left:3099px;top:988.75px;width:6px;height:6px;background:#e5e7eb;border-radius:50%"></div>
<div style="position:absolute;left:3099px;top:999.9px;width:6px;height:6px;background:#e5e7eb;border-radius:50%"></div>
<div style="position:absolute;left:78.5px;top:1064px;width:43px;height:43px;box-sizing:border-box;border:4px solid #4b5563;border-radius:11px;background:#111827"></div>
<svg style="position:absolute;left:528.5px;top:1065.7px;" width="32" height="32" viewBox="0 0 32 32"><path d="M26.5,14 A12.5,12.5 0 1 1 21.5,4.8" fill="none" stroke="#1f9a18" stroke-width="2.2" stroke-linecap="round"/><path d="M8.2,15 L13,20 L27,6" fill="none" stroke="#1f9a18" stroke-width="2.2" stroke-linecap="round" stroke-linejoin="round"/></svg>
<div style="position:absolute;left:722.0px;top:1070.3px;font-size:28px;line-height:28px;font-weight:400;color:#2a9be6;white-space:pre;letter-spacing:-0.19px;-webkit-text-stroke:0.3px #2a9be6;">ip-10-10-109-69.ec2.inter</div>
<div style="position:absolute;left:1033.0px;top:1070.3px;font-size:28px;line-height:28px;font-weight:400;color:#e5e7eb;white-space:pre;letter-spacing:-1.44px;-webkit-text-stroke:0.3px #e5e7eb;">...</div>
<div style="position:absolute;left:1433.7px;top:1070.3px;font-size:28px;line-height:28px;font-weight:400;color:#1f8c12;white-space:pre;-webkit-text-stroke:0.3px #1f8c12;">26</div>
<svg style="position:absolute;left:1467px;top:1070.0px;" width="14" height="26" viewBox="0 0 14 26"><path d="M2.5,24.5 L11.5,1.5" stroke="#e5e7eb" stroke-width="2.6"/></svg>
<div style="position:absolute;left:1489.5px;top:1070.3px;font-size:28px;line-height:28px;font-weight:400;color:#e5e7eb;white-space:pre;-webkit-text-stroke:0.3px #e5e7eb;">27</div>
<div style="position:absolute;left:1667.0px;top:1070.3px;font-size:28px;line-height:28px;font-weight:400;color:#1f8c12;white-space:pre;-webkit-text-stroke:0.3px #1f8c12;">1</div>
<svg style="position:absolute;left:1680.5px;top:1070.0px;" width="14" height="26" viewBox="0 0 14 26"><path d="M2.5,24.5 L11.5,1.5" stroke="#e5e7eb" stroke-width="2.6"/></svg>
<div style="position:absolute;left:1703.0px;top:1070.3px;font-size:28px;line-height:28px;font-weight:400;color:#e5e7eb;white-space:pre;-webkit-text-stroke:0.3px #e5e7eb;">1</div>
<div style="position:absolute;left:1897.6px;top:1070.3px;font-size:28px;line-height:28px;font-weight:400;color:#1f8c12;white-space:pre;-webkit-text-stroke:0.3px #1f8c12;">6</div>
<svg style="position:absolute;left:1916.5px;top:1070.0px;" width="14" height="26" viewBox="0 0 14 26"><path d="M2.5,24.5 L11.5,1.5" stroke="#e5e7eb" stroke-width="2.6"/></svg>
<div style="position:absolute;left:1939.0px;top:1070.3px;font-size:28px;line-height:28px;font-weight:400;color:#e5e7eb;white-space:pre;-webkit-text-stroke:0.3px #e5e7eb;">6</div>
<div style="position:absolute;left:2122.0px;top:1070.3px;font-size:28px;line-height:28px;font-weight:400;color:#1f8c12;white-space:pre;-webkit-text-stroke:0.3px #1f8c12;">1</div>
<svg style="position:absolute;left:2135.4px;top:1070.0px;" width="14" height="26" viewBox="0 0 14 26"><path d="M2.5,24.5 L11.5,1.5" stroke="#e5e7eb" stroke-width="2.6"/></svg>
<div style="position:absolute;left:2157.9px;top:1070.3px;font-size:28px;line-height:28px;font-weight:400;color:#e5e7eb;white-space:pre;-webkit-text-stroke:0.3px #e5e7eb;">1</div>
<div style="position:absolute;left:2392.0px;top:1070.3px;font-size:28px;line-height:28px;font-weight:400;color:#1f8c12;white-space:pre;-webkit-text-stroke:0.3px #1f8c12;">1</div>
<svg style="position:absolute;left:2405px;top:1070.0px;" width="14" height="26" viewBox="0 0 14 26"><path d="M2.5,24.5 L11.5,1.5" stroke="#e5e7eb" stroke-width="2.6"/></svg>
<div style="position:absolute;left:2427.5px;top:1070.3px;font-size:28px;line-height:28px;font-weight:400;color:#e5e7eb;white-space:pre;-webkit-text-stroke:0.3px #e5e7eb;">1</div>
<div style="position:absolute;left:2584.0px;top:1070.3px;font-size:28px;line-height:28px;font-weight:400;color:#1f8c12;white-space:pre;transform:scaleX(0.74);transform-origin:0 0;-webkit-text-stroke:0.3px #1f8c12;">11</div>
<svg style="position:absolute;left:2607.7px;top:1070.0px;" width="14" height="26" viewBox="0 0 14 26"><path d="M2.5,24.5 L11.5,1.5" stroke="#e5e7eb" stroke-width="2.6"/></svg>
<div style="position:absolute;left:2630.2px;top:1070.3px;font-size:28px;line-height:28px;font-weight:400;color:#e5e7eb;white-space:pre;transform:scaleX(0.74);transform-origin:0 0;-webkit-text-stroke:0.3px #e5e7eb;">11</div>
<div style="position:absolute;left:2781.0px;top:1070.3px;font-size:28px;line-height:28px;font-weight:400;color:#e5e7eb;white-space:pre;-webkit-text-stroke:0.3px #e5e7eb;">90</div>
<div style="position:absolute;left:3099px;top:1071.6000000000001px;width:6px;height:6px;background:#e5e7eb;border-radius:50%"></div>
<div style="position:absolute;left:3099px;top:1082.7500000000002px;width:6px;height:6px;background:#e5e7eb;border-radius:50%"></div>
<div style="position:absolute;left:3099px;top:1093.9px;width:6px;height:6px;background:#e5e7eb;border-radius:50%"></div>
<div style="position:absolute;left:78.5px;top:1158px;width:43px;height:43px;box-sizing:border-box;border:4px solid #4b5563;border-radius:11px;background:#111827"></div>
<svg style="position:absolute;left:528.5px;top:1159.7px;" width="32" height="32" viewBox="0 0 32 32"><path d="M26.5,14 A12.5,12.5 0 1 1 21.5,4.8" fill="none" stroke="#1f9a18" stroke-width="2.2" stroke-linecap="round"/><path d="M8.2,15 L13,20 L27,6" fill="none" stroke="#1f9a18" stroke-width="2.2" stroke-linecap="round" stroke-linejoin="round"/></svg>
<div style="position:absolute;left:722.0px;top:1164.3px;font-size:28px;line-height:28px;font-weight:400;color:#2a9be6;white-space:pre;letter-spacing:-0.19px;-webkit-text-stroke:0.3px #2a9be6;">ip-10-10-109-69.ec2.inter</div>
<div style="position:absolute;left:1033.0px;top:1164.3px;font-size:28px;line-height:28px;font-weight:400;color:#e5e7eb;white-space:pre;letter-spacing:-1.44px;-webkit-text-stroke:0.3px #e5e7eb;">...</div>
<div style="position:absolute;left:1433.7px;top:1164.3px;font-size:28px;line-height:28px;font-weight:400;color:#1f8c12;white-space:pre;-webkit-text-stroke:0.3px #1f8c12;">26</div>
<svg style="position:absolute;left:1467px;top:1164.0px;" width="14" height="26" viewBox="0 0 14 26"><path d="M2.5,24.5 L11.5,1.5" stroke="#e5e7eb" stroke-width="2.6"/></svg>
<div style="position:absolute;left:1489.5px;top:1164.3px;font-size:28px;line-height:28px;font-weight:400;color:#e5e7eb;white-space:pre;-webkit-text-stroke:0.3px #e5e7eb;">27</div>
<div style="position:absolute;left:1667.0px;top:1164.3px;font-size:28px;line-height:28px;font-weight:400;color:#1f8c12;white-space:pre;-webkit-text-stroke:0.3px #1f8c12;">1</div>
<svg style="position:absolute;left:1680.5px;top:1164.0px;" width="14" height="26" viewBox="0 0 14 26"><path d="M2.5,24.5 L11.5,1.5" stroke="#e5e7eb" stroke-width="2.6"/></svg>
<div style="position:absolute;left:1703.0px;top:1164.3px;font-size:28px;line-height:28px;font-weight:400;color:#e5e7eb;white-space:pre;-webkit-text-stroke:0.3px #e5e7eb;">1</div>
<div style="position:absolute;left:1897.6px;top:1164.3px;font-size:28px;line-height:28px;font-weight:400;color:#1f8c12;white-space:pre;-webkit-text-stroke:0.3px #1f8c12;">6</div>
<svg style="position:absolute;left:1916.5px;top:1164.0px;" width="14" height="26" viewBox="0 0 14 26"><path d="M2.5,24.5 L11.5,1.5" stroke="#e5e7eb" stroke-width="2.6"/></svg>
<div style="position:absolute;left:1939.0px;top:1164.3px;font-size:28px;line-height:28px;font-weight:400;color:#e5e7eb;white-space:pre;-webkit-text-stroke:0.3px #e5e7eb;">6</div>
<div style="position:absolute;left:2122.0px;top:1164.3px;font-size:28px;line-height:28px;font-weight:400;color:#1f8c12;white-space:pre;-webkit-text-stroke:0.3px #1f8c12;">1</div>
<svg style="position:absolute;left:2135.4px;top:1164.0px;" width="14" height="26" viewBox="0 0 14 26"><path d="M2.5,24.5 L11.5,1.5" stroke="#e5e7eb" stroke-width="2.6"/></svg>
<div style="position:absolute;left:2157.9px;top:1164.3px;font-size:28px;line-height:28px;font-weight:400;color:#e5e7eb;white-space:pre;-webkit-text-stroke:0.3px #e5e7eb;">1</div>
<div style="position:absolute;left:2392.0px;top:1164.3px;font-size:28px;line-height:28px;font-weight:400;color:#1f8c12;white-space:pre;-webkit-text-stroke:0.3px #1f8c12;">1</div>
<svg style="position:absolute;left:2405px;top:1164.0px;" width="14" height="26" viewBox="0 0 14 26"><path d="M2.5,24.5 L11.5,1.5" stroke="#e5e7eb" stroke-width="2.6"/></svg>
<div style="position:absolute;left:2427.5px;top:1164.3px;font-size:28px;line-height:28px;font-weight:400;color:#e5e7eb;white-space:pre;-webkit-text-stroke:0.3px #e5e7eb;">1</div>
<div style="position:absolute;left:2584.0px;top:1164.3px;font-size:28px;line-height:28px;font-weight:400;color:#1f8c12;white-space:pre;transform:scaleX(0.74);transform-origin:0 0;-webkit-text-stroke:0.3px #1f8c12;">11</div>
<svg style="position:absolute;left:2607.7px;top:1164.0px;" width="14" height="26" viewBox="0 0 14 26"><path d="M2.5,24.5 L11.5,1.5" stroke="#e5e7eb" stroke-width="2.6"/></svg>
<div style="position:absolute;left:2630.2px;top:1164.3px;font-size:28px;line-height:28px;font-weight:400;color:#e5e7eb;white-space:pre;transform:scaleX(0.74);transform-origin:0 0;-webkit-text-stroke:0.3px #e5e7eb;">11</div>
<div style="position:absolute;left:2781.0px;top:1164.3px;font-size:28px;line-height:28px;font-weight:400;color:#e5e7eb;white-space:pre;-webkit-text-stroke:0.3px #e5e7eb;">90</div>
<div style="position:absolute;left:3099px;top:1165.6000000000001px;width:6px;height:6px;background:#e5e7eb;border-radius:50%"></div>
<div style="position:absolute;left:3099px;top:1176.7500000000002px;width:6px;height:6px;background:#e5e7eb;border-radius:50%"></div>
<div style="position:absolute;left:3099px;top:1187.9px;width:6px;height:6px;background:#e5e7eb;border-radius:50%"></div>
<div style="position:absolute;left:78.5px;top:1252px;width:43px;height:43px;box-sizing:border-box;border:4px solid #4b5563;border-radius:11px;background:#111827"></div>
<svg style="position:absolute;left:528.5px;top:1253.7px;" width="32" height="32" viewBox="0 0 32 32"><path d="M26.5,14 A12.5,12.5 0 1 1 21.5,4.8" fill="none" stroke="#1f9a18" stroke-width="2.2" stroke-linecap="round"/><path d="M8.2,15 L13,20 L27,6" fill="none" stroke="#1f9a18" stroke-width="2.2" stroke-linecap="round" stroke-linejoin="round"/></svg>
<div style="position:absolute;left:722.0px;top:1258.3px;font-size:28px;line-height:28px;font-weight:400;color:#2a9be6;white-space:pre;letter-spacing:-0.19px;-webkit-text-stroke:0.3px #2a9be6;">ip-10-10-109-69.ec2.inter</div>
<div style="position:absolute;left:1033.0px;top:1258.3px;font-size:28px;line-height:28px;font-weight:400;color:#e5e7eb;white-space:pre;letter-spacing:-1.44px;-webkit-text-stroke:0.3px #e5e7eb;">...</div>
<div style="position:absolute;left:1433.7px;top:1258.3px;font-size:28px;line-height:28px;font-weight:400;color:#1f8c12;white-space:pre;-webkit-text-stroke:0.3px #1f8c12;">26</div>
<svg style="position:absolute;left:1467px;top:1258.0px;" width="14" height="26" viewBox="0 0 14 26"><path d="M2.5,24.5 L11.5,1.5" stroke="#e5e7eb" stroke-width="2.6"/></svg>
<div style="position:absolute;left:1489.5px;top:1258.3px;font-size:28px;line-height:28px;font-weight:400;color:#e5e7eb;white-space:pre;-webkit-text-stroke:0.3px #e5e7eb;">27</div>
<div style="position:absolute;left:1667.0px;top:1258.3px;font-size:28px;line-height:28px;font-weight:400;color:#1f8c12;white-space:pre;-webkit-text-stroke:0.3px #1f8c12;">1</div>
<svg style="position:absolute;left:1680.5px;top:1258.0px;" width="14" height="26" viewBox="0 0 14 26"><path d="M2.5,24.5 L11.5,1.5" stroke="#e5e7eb" stroke-width="2.6"/></svg>
<div style="position:absolute;left:1703.0px;top:1258.3px;font-size:28px;line-height:28px;font-weight:400;color:#e5e7eb;white-space:pre;-webkit-text-stroke:0.3px #e5e7eb;">1</div>
<div style="position:absolute;left:1897.6px;top:1258.3px;font-size:28px;line-height:28px;font-weight:400;color:#1f8c12;white-space:pre;-webkit-text-stroke:0.3px #1f8c12;">6</div>
<svg style="position:absolute;left:1916.5px;top:1258.0px;" width="14" height="26" viewBox="0 0 14 26"><path d="M2.5,24.5 L11.5,1.5" stroke="#e5e7eb" stroke-width="2.6"/></svg>
<div style="position:absolute;left:1939.0px;top:1258.3px;font-size:28px;line-height:28px;font-weight:400;color:#e5e7eb;white-space:pre;-webkit-text-stroke:0.3px #e5e7eb;">6</div>
<div style="position:absolute;left:2122.0px;top:1258.3px;font-size:28px;line-height:28px;font-weight:400;color:#1f8c12;white-space:pre;-webkit-text-stroke:0.3px #1f8c12;">1</div>
<svg style="position:absolute;left:2135.4px;top:1258.0px;" width="14" height="26" viewBox="0 0 14 26"><path d="M2.5,24.5 L11.5,1.5" stroke="#e5e7eb" stroke-width="2.6"/></svg>
<div style="position:absolute;left:2157.9px;top:1258.3px;font-size:28px;line-height:28px;font-weight:400;color:#e5e7eb;white-space:pre;-webkit-text-stroke:0.3px #e5e7eb;">1</div>
<div style="position:absolute;left:2392.0px;top:1258.3px;font-size:28px;line-height:28px;font-weight:400;color:#1f8c12;white-space:pre;-webkit-text-stroke:0.3px #1f8c12;">1</div>
<svg style="position:absolute;left:2405px;top:1258.0px;" width="14" height="26" viewBox="0 0 14 26"><path d="M2.5,24.5 L11.5,1.5" stroke="#e5e7eb" stroke-width="2.6"/></svg>
<div style="position:absolute;left:2427.5px;top:1258.3px;font-size:28px;line-height:28px;font-weight:400;color:#e5e7eb;white-space:pre;-webkit-text-stroke:0.3px #e5e7eb;">1</div>
<div style="position:absolute;left:2584.0px;top:1258.3px;font-size:28px;line-height:28px;font-weight:400;color:#1f8c12;white-space:pre;transform:scaleX(0.74);transform-origin:0 0;-webkit-text-stroke:0.3px #1f8c12;">11</div>
<svg style="position:absolute;left:2607.7px;top:1258.0px;" width="14" height="26" viewBox="0 0 14 26"><path d="M2.5,24.5 L11.5,1.5" stroke="#e5e7eb" stroke-width="2.6"/></svg>
<div style="position:absolute;left:2630.2px;top:1258.3px;font-size:28px;line-height:28px;font-weight:400;color:#e5e7eb;white-space:pre;transform:scaleX(0.74);transform-origin:0 0;-webkit-text-stroke:0.3px #e5e7eb;">11</div>
<div style="position:absolute;left:2781.0px;top:1258.3px;font-size:28px;line-height:28px;font-weight:400;color:#e5e7eb;white-space:pre;-webkit-text-stroke:0.3px #e5e7eb;">90</div>
<div style="position:absolute;left:3099px;top:1259.6000000000001px;width:6px;height:6px;background:#e5e7eb;border-radius:50%"></div>
<div style="position:absolute;left:3099px;top:1270.7500000000002px;width:6px;height:6px;background:#e5e7eb;border-radius:50%"></div>
<div style="position:absolute;left:3099px;top:1281.9px;width:6px;height:6px;background:#e5e7eb;border-radius:50%"></div>
<div style="position:absolute;left:78.5px;top:1346px;width:43px;height:43px;box-sizing:border-box;border:4px solid #4b5563;border-radius:11px;background:#111827"></div>
<svg style="position:absolute;left:528.5px;top:1347.7px;" width="32" height="32" viewBox="0 0 32 32"><path d="M26.5,14 A12.5,12.5 0 1 1 21.5,4.8" fill="none" stroke="#1f9a18" stroke-width="2.2" stroke-linecap="round"/><path d="M8.2,15 L13,20 L27,6" fill="none" stroke="#1f9a18" stroke-width="2.2" stroke-linecap="round" stroke-linejoin="round"/></svg>
<div style="position:absolute;left:722.0px;top:1352.3px;font-size:28px;line-height:28px;font-weight:400;color:#2a9be6;white-space:pre;letter-spacing:-0.19px;-webkit-text-stroke:0.3px #2a9be6;">ip-10-10-109-69.ec2.inter</div>
<div style="position:absolute;left:1033.0px;top:1352.3px;font-size:28px;line-height:28px;font-weight:400;color:#e5e7eb;white-space:pre;letter-spacing:-1.44px;-webkit-text-stroke:0.3px #e5e7eb;">...</div>
<div style="position:absolute;left:1433.7px;top:1352.3px;font-size:28px;line-height:28px;font-weight:400;color:#1f8c12;white-space:pre;-webkit-text-stroke:0.3px #1f8c12;">26</div>
<svg style="position:absolute;left:1467px;top:1352.0px;" width="14" height="26" viewBox="0 0 14 26"><path d="M2.5,24.5 L11.5,1.5" stroke="#e5e7eb" stroke-width="2.6"/></svg>
<div style="position:absolute;left:1489.5px;top:1352.3px;font-size:28px;line-height:28px;font-weight:400;color:#e5e7eb;white-space:pre;-webkit-text-stroke:0.3px #e5e7eb;">27</div>
<div style="position:absolute;left:1667.0px;top:1352.3px;font-size:28px;line-height:28px;font-weight:400;color:#1f8c12;white-space:pre;-webkit-text-stroke:0.3px #1f8c12;">1</div>
<svg style="position:absolute;left:1680.5px;top:1352.0px;" width="14" height="26" viewBox="0 0 14 26"><path d="M2.5,24.5 L11.5,1.5" stroke="#e5e7eb" stroke-width="2.6"/></svg>
<div style="position:absolute;left:1703.0px;top:1352.3px;font-size:28px;line-height:28px;font-weight:400;color:#e5e7eb;white-space:pre;-webkit-text-stroke:0.3px #e5e7eb;">1</div>
<div style="position:absolute;left:1897.6px;top:1352.3px;font-size:28px;line-height:28px;font-weight:400;color:#1f8c12;white-space:pre;-webkit-text-stroke:0.3px #1f8c12;">6</div>
<svg style="position:absolute;left:1916.5px;top:1352.0px;" width="14" height="26" viewBox="0 0 14 26"><path d="M2.5,24.5 L11.5,1.5" stroke="#e5e7eb" stroke-width="2.6"/></svg>
<div style="position:absolute;left:1939.0px;top:1352.3px;font-size:28px;line-height:28px;font-weight:400;color:#e5e7eb;white-space:pre;-webkit-text-stroke:0.3px #e5e7eb;">6</div>
<div style="position:absolute;left:2122.0px;top:1352.3px;font-size:28px;line-height:28px;font-weight:400;color:#1f8c12;white-space:pre;-webkit-text-stroke:0.3px #1f8c12;">1</div>
<svg style="position:absolute;left:2135.4px;top:1352.0px;" width="14" height="26" viewBox="0 0 14 26"><path d="M2.5,24.5 L11.5,1.5" stroke="#e5e7eb" stroke-width="2.6"/></svg>
<div style="position:absolute;left:2157.9px;top:1352.3px;font-size:28px;line-height:28px;font-weight:400;color:#e5e7eb;white-space:pre;-webkit-text-stroke:0.3px #e5e7eb;">1</div>
<div style="position:absolute;left:2392.0px;top:1352.3px;font-size:28px;line-height:28px;font-weight:400;color:#1f8c12;white-space:pre;-webkit-text-stroke:0.3px #1f8c12;">1</div>
<svg style="position:absolute;left:2405px;top:1352.0px;" width="14" height="26" viewBox="0 0 14 26"><path d="M2.5,24.5 L11.5,1.5" stroke="#e5e7eb" stroke-width="2.6"/></svg>
<div style="position:absolute;left:2427.5px;top:1352.3px;font-size:28px;line-height:28px;font-weight:400;color:#e5e7eb;white-space:pre;-webkit-text-stroke:0.3px #e5e7eb;">1</div>
<div style="position:absolute;left:2584.0px;top:1352.3px;font-size:28px;line-height:28px;font-weight:400;color:#1f8c12;white-space:pre;transform:scaleX(0.74);transform-origin:0 0;-webkit-text-stroke:0.3px #1f8c12;">11</div>
<svg style="position:absolute;left:2607.7px;top:1352.0px;" width="14" height="26" viewBox="0 0 14 26"><path d="M2.5,24.5 L11.5,1.5" stroke="#e5e7eb" stroke-width="2.6"/></svg>
<div style="position:absolute;left:2630.2px;top:1352.3px;font-size:28px;line-height:28px;font-weight:400;color:#e5e7eb;white-space:pre;transform:scaleX(0.74);transform-origin:0 0;-webkit-text-stroke:0.3px #e5e7eb;">11</div>
<div style="position:absolute;left:2781.0px;top:1352.3px;font-size:28px;line-height:28px;font-weight:400;color:#e5e7eb;white-space:pre;-webkit-text-stroke:0.3px #e5e7eb;">90</div>
<div style="position:absolute;left:3099px;top:1353.6000000000001px;width:6px;height:6px;background:#e5e7eb;border-radius:50%"></div>
<div style="position:absolute;left:3099px;top:1364.7500000000002px;width:6px;height:6px;background:#e5e7eb;border-radius:50%"></div>
<div style="position:absolute;left:3099px;top:1375.9px;width:6px;height:6px;background:#e5e7eb;border-radius:50%"></div>
<div style="position:absolute;left:78.5px;top:1440px;width:43px;height:43px;box-sizing:border-box;border:4px solid #4b5563;border-radius:11px;background:#111827"></div>
<svg style="position:absolute;left:528.5px;top:1441.7px;" width="32" height="32" viewBox="0 0 32 32"><path d="M26.5,14 A12.5,12.5 0 1 1 21.5,4.8" fill="none" stroke="#1f9a18" stroke-width="2.2" stroke-linecap="round"/><path d="M8.2,15 L13,20 L27,6" fill="none" stroke="#1f9a18" stroke-width="2.2" stroke-linecap="round" stroke-linejoin="round"/></svg>
<div style="position:absolute;left:722.0px;top:1446.3px;font-size:28px;line-height:28px;font-weight:400;color:#2a9be6;white-space:pre;letter-spacing:-0.19px;-webkit-text-stroke:0.3px #2a9be6;">ip-10-10-109-69.ec2.inter</div>
<div style="position:absolute;left:1033.0px;top:1446.3px;font-size:28px;line-height:28px;font-weight:400;color:#e5e7eb;white-space:pre;letter-spacing:-1.44px;-webkit-text-stroke:0.3px #e5e7eb;">...</div>
<div style="position:absolute;left:1433.7px;top:1446.3px;font-size:28px;line-height:28px;font-weight:400;color:#1f8c12;white-space:pre;-webkit-text-stroke:0.3px #1f8c12;">26</div>
<svg style="position:absolute;left:1467px;top:1446.0px;" width="14" height="26" viewBox="0 0 14 26"><path d="M2.5,24.5 L11.5,1.5" stroke="#e5e7eb" stroke-width="2.6"/></svg>
<div style="position:absolute;left:1489.5px;top:1446.3px;font-size:28px;line-height:28px;font-weight:400;color:#e5e7eb;white-space:pre;-webkit-text-stroke:0.3px #e5e7eb;">27</div>
<div style="position:absolute;left:1667.0px;top:1446.3px;font-size:28px;line-height:28px;font-weight:400;color:#1f8c12;white-space:pre;-webkit-text-stroke:0.3px #1f8c12;">1</div>
<svg style="position:absolute;left:1680.5px;top:1446.0px;" width="14" height="26" viewBox="0 0 14 26"><path d="M2.5,24.5 L11.5,1.5" stroke="#e5e7eb" stroke-width="2.6"/></svg>
<div style="position:absolute;left:1703.0px;top:1446.3px;font-size:28px;line-height:28px;font-weight:400;color:#e5e7eb;white-space:pre;-webkit-text-stroke:0.3px #e5e7eb;">1</div>
<div style="position:absolute;left:1897.6px;top:1446.3px;font-size:28px;line-height:28px;font-weight:400;color:#1f8c12;white-space:pre;-webkit-text-stroke:0.3px #1f8c12;">6</div>
<svg style="position:absolute;left:1916.5px;top:1446.0px;" width="14" height="26" viewBox="0 0 14 26"><path d="M2.5,24.5 L11.5,1.5" stroke="#e5e7eb" stroke-width="2.6"/></svg>
<div style="position:absolute;left:1939.0px;top:1446.3px;font-size:28px;line-height:28px;font-weight:400;color:#e5e7eb;white-space:pre;-webkit-text-stroke:0.3px #e5e7eb;">6</div>
<div style="position:absolute;left:2122.0px;top:1446.3px;font-size:28px;line-height:28px;font-weight:400;color:#1f8c12;white-space:pre;-webkit-text-stroke:0.3px #1f8c12;">1</div>
<svg style="position:absolute;left:2135.4px;top:1446.0px;" width="14" height="26" viewBox="0 0 14 26"><path d="M2.5,24.5 L11.5,1.5" stroke="#e5e7eb" stroke-width="2.6"/></svg>
<div style="position:absolute;left:2157.9px;top:1446.3px;font-size:28px;line-height:28px;font-weight:400;color:#e5e7eb;white-space:pre;-webkit-text-stroke:0.3px #e5e7eb;">1</div>
<div style="position:absolute;left:2392.0px;top:1446.3px;font-size:28px;line-height:28px;font-weight:400;color:#1f8c12;white-space:pre;-webkit-text-stroke:0.3px #1f8c12;">1</div>
<svg style="position:absolute;left:2405px;top:1446.0px;" width="14" height="26" viewBox="0 0 14 26"><path d="M2.5,24.5 L11.5,1.5" stroke="#e5e7eb" stroke-width="2.6"/></svg>
<div style="position:absolute;left:2427.5px;top:1446.3px;font-size:28px;line-height:28px;font-weight:400;color:#e5e7eb;white-space:pre;-webkit-text-stroke:0.3px #e5e7eb;">1</div>
<div style="position:absolute;left:2584.0px;top:1446.3px;font-size:28px;line-height:28px;font-weight:400;color:#1f8c12;white-space:pre;transform:scaleX(0.74);transform-origin:0 0;-webkit-text-stroke:0.3px #1f8c12;">11</div>
<svg style="position:absolute;left:2607.7px;top:1446.0px;" width="14" height="26" viewBox="0 0 14 26"><path d="M2.5,24.5 L11.5,1.5" stroke="#e5e7eb" stroke-width="2.6"/></svg>
<div style="position:absolute;left:2630.2px;top:1446.3px;font-size:28px;line-height:28px;font-weight:400;color:#e5e7eb;white-space:pre;transform:scaleX(0.74);transform-origin:0 0;-webkit-text-stroke:0.3px #e5e7eb;">11</div>
<div style="position:absolute;left:2781.0px;top:1446.3px;font-size:28px;line-height:28px;font-weight:400;color:#e5e7eb;white-space:pre;-webkit-text-stroke:0.3px #e5e7eb;">90</div>
<div style="position:absolute;left:3099px;top:1447.6000000000001px;width:6px;height:6px;background:#e5e7eb;border-radius:50%"></div>
<div style="position:absolute;left:3099px;top:1458.7500000000002px;width:6px;height:6px;background:#e5e7eb;border-radius:50%"></div>
<div style="position:absolute;left:3099px;top:1469.9px;width:6px;height:6px;background:#e5e7eb;border-radius:50%"></div>
<div style="position:absolute;left:78.5px;top:1534px;width:43px;height:43px;box-sizing:border-box;border:4px solid #4b5563;border-radius:11px;background:#111827"></div>
<svg style="position:absolute;left:528.5px;top:1535.7px;" width="32" height="32" viewBox="0 0 32 32"><path d="M26.5,14 A12.5,12.5 0 1 1 21.5,4.8" fill="none" stroke="#1f9a18" stroke-width="2.2" stroke-linecap="round"/><path d="M8.2,15 L13,20 L27,6" fill="none" stroke="#1f9a18" stroke-width="2.2" stroke-linecap="round" stroke-linejoin="round"/></svg>
<div style="position:absolute;left:722.0px;top:1540.3px;font-size:28px;line-height:28px;font-weight:400;color:#2a9be6;white-space:pre;letter-spacing:-0.19px;-webkit-text-stroke:0.3px #2a9be6;">ip-10-10-109-69.ec2.inter</div>
<div style="position:absolute;left:1033.0px;top:1540.3px;font-size:28px;line-height:28px;font-weight:400;color:#e5e7eb;white-space:pre;letter-spacing:-1.44px;-webkit-text-stroke:0.3px #e5e7eb;">...</div>
<div style="position:absolute;left:1433.7px;top:1540.3px;font-size:28px;line-height:28px;font-weight:400;color:#1f8c12;white-space:pre;-webkit-text-stroke:0.3px #1f8c12;">26</div>
<svg style="position:absolute;left:1467px;top:1540.0px;" width="14" height="26" viewBox="0 0 14 26"><path d="M2.5,24.5 L11.5,1.5" stroke="#e5e7eb" stroke-width="2.6"/></svg>
<div style="position:absolute;left:1489.5px;top:1540.3px;font-size:28px;line-height:28px;font-weight:400;color:#e5e7eb;white-space:pre;-webkit-text-stroke:0.3px #e5e7eb;">27</div>
<div style="position:absolute;left:1667.0px;top:1540.3px;font-size:28px;line-height:28px;font-weight:400;color:#1f8c12;white-space:pre;-webkit-text-stroke:0.3px #1f8c12;">1</div>
<svg style="position:absolute;left:1680.5px;top:1540.0px;" width="14" height="26" viewBox="0 0 14 26"><path d="M2.5,24.5 L11.5,1.5" stroke="#e5e7eb" stroke-width="2.6"/></svg>
<div style="position:absolute;left:1703.0px;top:1540.3px;font-size:28px;line-height:28px;font-weight:400;color:#e5e7eb;white-space:pre;-webkit-text-stroke:0.3px #e5e7eb;">1</div>
<div style="position:absolute;left:1897.6px;top:1540.3px;font-size:28px;line-height:28px;font-weight:400;color:#1f8c12;white-space:pre;-webkit-text-stroke:0.3px #1f8c12;">6</div>
<svg style="position:absolute;left:1916.5px;top:1540.0px;" width="14" height="26" viewBox="0 0 14 26"><path d="M2.5,24.5 L11.5,1.5" stroke="#e5e7eb" stroke-width="2.6"/></svg>
<div style="position:absolute;left:1939.0px;top:1540.3px;font-size:28px;line-height:28px;font-weight:400;color:#e5e7eb;white-space:pre;-webkit-text-stroke:0.3px #e5e7eb;">6</div>
<div style="position:absolute;left:2122.0px;top:1540.3px;font-size:28px;line-height:28px;font-weight:400;color:#1f8c12;white-space:pre;-webkit-text-stroke:0.3px #1f8c12;">1</div>
<svg style="position:absolute;left:2135.4px;top:1540.0px;" width="14" height="26" viewBox="0 0 14 26"><path d="M2.5,24.5 L11.5,1.5" stroke="#e5e7eb" stroke-width="2.6"/></svg>
<div style="position:absolute;left:2157.9px;top:1540.3px;font-size:28px;line-height:28px;font-weight:400;color:#e5e7eb;white-space:pre;-webkit-text-stroke:0.3px #e5e7eb;">1</div>
<div style="position:absolute;left:2392.0px;top:1540.3px;font-size:28px;line-height:28px;font-weight:400;color:#1f8c12;white-space:pre;-webkit-text-stroke:0.3px #1f8c12;">1</div>
<svg style="position:absolute;left:2405px;top:1540.0px;" width="14" height="26" viewBox="0 0 14 26"><path d="M2.5,24.5 L11.5,1.5" stroke="#e5e7eb" stroke-width="2.6"/></svg>
<div style="position:absolute;left:2427.5px;top:1540.3px;font-size:28px;line-height:28px;font-weight:400;color:#e5e7eb;white-space:pre;-webkit-text-stroke:0.3px #e5e7eb;">1</div>
<div style="position:absolute;left:2584.0px;top:1540.3px;font-size:28px;line-height:28px;font-weight:400;color:#1f8c12;white-space:pre;transform:scaleX(0.74);transform-origin:0 0;-webkit-text-stroke:0.3px #1f8c12;">11</div>
<svg style="position:absolute;left:2607.7px;top:1540.0px;" width="14" height="26" viewBox="0 0 14 26"><path d="M2.5,24.5 L11.5,1.5" stroke="#e5e7eb" stroke-width="2.6"/></svg>
<div style="position:absolute;left:2630.2px;top:1540.3px;font-size:28px;line-height:28px;font-weight:400;color:#e5e7eb;white-space:pre;transform:scaleX(0.74);transform-origin:0 0;-webkit-text-stroke:0.3px #e5e7eb;">11</div>
<div style="position:absolute;left:2781.0px;top:1540.3px;font-size:28px;line-height:28px;font-weight:400;color:#e5e7eb;white-space:pre;-webkit-text-stroke:0.3px #e5e7eb;">90</div>
<div style="position:absolute;left:3099px;top:1541.6000000000001px;width:6px;height:6px;background:#e5e7eb;border-radius:50%"></div>
<div style="position:absolute;left:3099px;top:1552.7500000000002px;width:6px;height:6px;background:#e5e7eb;border-radius:50%"></div>
<div style="position:absolute;left:3099px;top:1563.9px;width:6px;height:6px;background:#e5e7eb;border-radius:50%"></div>
<div style="position:absolute;left:78.5px;top:1628px;width:43px;height:43px;box-sizing:border-box;border:4px solid #4b5563;border-radius:11px;background:#111827"></div>
<svg style="position:absolute;left:528.5px;top:1629.7px;" width="32" height="32" viewBox="0 0 32 32"><path d="M26.5,14 A12.5,12.5 0 1 1 21.5,4.8" fill="none" stroke="#1f9a18" stroke-width="2.2" stroke-linecap="round"/><path d="M8.2,15 L13,20 L27,6" fill="none" stroke="#1f9a18" stroke-width="2.2" stroke-linecap="round" stroke-linejoin="round"/></svg>
<div style="position:absolute;left:722.0px;top:1634.3px;font-size:28px;line-height:28px;font-weight:400;color:#2a9be6;white-space:pre;letter-spacing:-0.19px;-webkit-text-stroke:0.3px #2a9be6;">ip-10-10-109-69.ec2.inter</div>
<div style="position:absolute;left:1033.0px;top:1634.3px;font-size:28px;line-height:28px;font-weight:400;color:#e5e7eb;white-space:pre;letter-spacing:-1.44px;-webkit-text-stroke:0.3px #e5e7eb;">...</div>
<div style="position:absolute;left:1433.7px;top:1634.3px;font-size:28px;line-height:28px;font-weight:400;color:#1f8c12;white-space:pre;-webkit-text-stroke:0.3px #1f8c12;">26</div>
<svg style="position:absolute;left:1467px;top:1634.0px;" width="14" height="26" viewBox="0 0 14 26"><path d="M2.5,24.5 L11.5,1.5" stroke="#e5e7eb" stroke-width="2.6"/></svg>
<div style="position:absolute;left:1489.5px;top:1634.3px;font-size:28px;line-height:28px;font-weight:400;color:#e5e7eb;white-space:pre;-webkit-text-stroke:0.3px #e5e7eb;">27</div>
<div style="position:absolute;left:1667.0px;top:1634.3px;font-size:28px;line-height:28px;font-weight:400;color:#1f8c12;white-space:pre;-webkit-text-stroke:0.3px #1f8c12;">1</div>
<svg style="position:absolute;left:1680.5px;top:1634.0px;" width="14" height="26" viewBox="0 0 14 26"><path d="M2.5,24.5 L11.5,1.5" stroke="#e5e7eb" stroke-width="2.6"/></svg>
<div style="position:absolute;left:1703.0px;top:1634.3px;font-size:28px;line-height:28px;font-weight:400;color:#e5e7eb;white-space:pre;-webkit-text-stroke:0.3px #e5e7eb;">1</div>
<div style="position:absolute;left:1897.6px;top:1634.3px;font-size:28px;line-height:28px;font-weight:400;color:#1f8c12;white-space:pre;-webkit-text-stroke:0.3px #1f8c12;">6</div>
<svg style="position:absolute;left:1916.5px;top:1634.0px;" width="14" height="26" viewBox="0 0 14 26"><path d="M2.5,24.5 L11.5,1.5" stroke="#e5e7eb" stroke-width="2.6"/></svg>
<div style="position:absolute;left:1939.0px;top:1634.3px;font-size:28px;line-height:28px;font-weight:400;color:#e5e7eb;white-space:pre;-webkit-text-stroke:0.3px #e5e7eb;">6</div>
<div style="position:absolute;left:2122.0px;top:1634.3px;font-size:28px;line-height:28px;font-weight:400;color:#1f8c12;white-space:pre;-webkit-text-stroke:0.3px #1f8c12;">1</div>
<svg style="position:absolute;left:2135.4px;top:1634.0px;" width="14" height="26" viewBox="0 0 14 26"><path d="M2.5,24.5 L11.5,1.5" stroke="#e5e7eb" stroke-width="2.6"/></svg>
<div style="position:absolute;left:2157.9px;top:1634.3px;font-size:28px;line-height:28px;font-weight:400;color:#e5e7eb;white-space:pre;-webkit-text-stroke:0.3px #e5e7eb;">1</div>
<div style="position:absolute;left:2392.0px;top:1634.3px;font-size:28px;line-height:28px;font-weight:400;color:#1f8c12;white-space:pre;-webkit-text-stroke:0.3px #1f8c12;">1</div>
<svg style="position:absolute;left:2405px;top:1634.0px;" width="14" height="26" viewBox="0 0 14 26"><path d="M2.5,24.5 L11.5,1.5" stroke="#e5e7eb" stroke-width="2.6"/></svg>
<div style="position:absolute;left:2427.5px;top:1634.3px;font-size:28px;line-height:28px;font-weight:400;color:#e5e7eb;white-space:pre;-webkit-text-stroke:0.3px #e5e7eb;">1</div>
<div style="position:absolute;left:2584.0px;top:1634.3px;font-size:28px;line-height:28px;font-weight:400;color:#1f8c12;white-space:pre;transform:scaleX(0.74);transform-origin:0 0;-webkit-text-stroke:0.3px #1f8c12;">11</div>
<svg style="position:absolute;left:2607.7px;top:1634.0px;" width="14" height="26" viewBox="0 0 14 26"><path d="M2.5,24.5 L11.5,1.5" stroke="#e5e7eb" stroke-width="2.6"/></svg>
<div style="position:absolute;left:2630.2px;top:1634.3px;font-size:28px;line-height:28px;font-weight:400;color:#e5e7eb;white-space:pre;transform:scaleX(0.74);transform-origin:0 0;-webkit-text-stroke:0.3px #e5e7eb;">11</div>
<div style="position:absolute;left:2781.0px;top:1634.3px;font-size:28px;line-height:28px;font-weight:400;color:#e5e7eb;white-space:pre;-webkit-text-stroke:0.3px #e5e7eb;">90</div>
<div style="position:absolute;left:3099px;top:1635.6000000000001px;width:6px;height:6px;background:#e5e7eb;border-radius:50%"></div>
<div style="position:absolute;left:3099px;top:1646.7500000000002px;width:6px;height:6px;background:#e5e7eb;border-radius:50%"></div>
<div style="position:absolute;left:3099px;top:1657.9px;width:6px;height:6px;background:#e5e7eb;border-radius:50%"></div>
<div style="position:absolute;left:78.5px;top:1722px;width:43px;height:43px;box-sizing:border-box;border:4px solid #4b5563;border-radius:11px;background:#111827"></div>
<svg style="position:absolute;left:528.5px;top:1723.7px;" width="32" height="32" viewBox="0 0 32 32"><path d="M26.5,14 A12.5,12.5 0 1 1 21.5,4.8" fill="none" stroke="#1f9a18" stroke-width="2.2" stroke-linecap="round"/><path d="M8.2,15 L13,20 L27,6" fill="none" stroke="#1f9a18" stroke-width="2.2" stroke-linecap="round" stroke-linejoin="round"/></svg>
<div style="position:absolute;left:722.0px;top:1728.3px;font-size:28px;line-height:28px;font-weight:400;color:#2a9be6;white-space:pre;letter-spacing:-1.25px;-webkit-text-stroke:0.3px #2a9be6;">WIN-A5FUJREE9PM</div>
<div style="position:absolute;left:1433.7px;top:1728.3px;font-size:28px;line-height:28px;font-weight:400;color:#1f8c12;white-space:pre;-webkit-text-stroke:0.3px #1f8c12;">28</div>
<svg style="position:absolute;left:1467px;top:1728.0px;" width="14" height="26" viewBox="0 0 14 26"><path d="M2.5,24.5 L11.5,1.5" stroke="#e5e7eb" stroke-width="2.6"/></svg>
<div style="position:absolute;left:1489.5px;top:1728.3px;font-size:28px;line-height:28px;font-weight:400;color:#e5e7eb;white-space:pre;-webkit-text-stroke:0.3px #e5e7eb;">28</div>
<div style="position:absolute;left:1667.0px;top:1728.3px;font-size:28px;line-height:28px;font-weight:400;color:#1f8c12;white-space:pre;-webkit-text-stroke:0.3px #1f8c12;">1</div>
<svg style="position:absolute;left:1680.5px;top:1728.0px;" width="14" height="26" viewBox="0 0 14 26"><path d="M2.5,24.5 L11.5,1.5" stroke="#e5e7eb" stroke-width="2.6"/></svg>
<div style="position:absolute;left:1703.0px;top:1728.3px;font-size:28px;line-height:28px;font-weight:400;color:#e5e7eb;white-space:pre;-webkit-text-stroke:0.3px #e5e7eb;">1</div>
<div style="position:absolute;left:1897.6px;top:1728.3px;font-size:28px;line-height:28px;font-weight:400;color:#1f8c12;white-space:pre;-webkit-text-stroke:0.3px #1f8c12;">6</div>
<svg style="position:absolute;left:1916.5px;top:1728.0px;" width="14" height="26" viewBox="0 0 14 26"><path d="M2.5,24.5 L11.5,1.5" stroke="#e5e7eb" stroke-width="2.6"/></svg>
<div style="position:absolute;left:1939.0px;top:1728.3px;font-size:28px;line-height:28px;font-weight:400;color:#e5e7eb;white-space:pre;-webkit-text-stroke:0.3px #e5e7eb;">6</div>
<div style="position:absolute;left:2122.0px;top:1728.3px;font-size:28px;line-height:28px;font-weight:400;color:#1f8c12;white-space:pre;-webkit-text-stroke:0.3px #1f8c12;">2</div>
<svg style="position:absolute;left:2140px;top:1728.0px;" width="14" height="26" viewBox="0 0 14 26"><path d="M2.5,24.5 L11.5,1.5" stroke="#e5e7eb" stroke-width="2.6"/></svg>
<div style="position:absolute;left:2162.5px;top:1728.3px;font-size:28px;line-height:28px;font-weight:400;color:#e5e7eb;white-space:pre;-webkit-text-stroke:0.3px #e5e7eb;">2</div>
<div style="position:absolute;left:2392.0px;top:1728.3px;font-size:28px;line-height:28px;font-weight:400;color:#1f8c12;white-space:pre;-webkit-text-stroke:0.3px #1f8c12;">1</div>
<svg style="position:absolute;left:2405px;top:1728.0px;" width="14" height="26" viewBox="0 0 14 26"><path d="M2.5,24.5 L11.5,1.5" stroke="#e5e7eb" stroke-width="2.6"/></svg>
<div style="position:absolute;left:2427.5px;top:1728.3px;font-size:28px;line-height:28px;font-weight:400;color:#e5e7eb;white-space:pre;-webkit-text-stroke:0.3px #e5e7eb;">1</div>
<div style="position:absolute;left:2584.0px;top:1728.3px;font-size:28px;line-height:28px;font-weight:400;color:#1f8c12;white-space:pre;transform:scaleX(0.86);transform-origin:0 0;-webkit-text-stroke:0.3px #1f8c12;">12</div>
<svg style="position:absolute;left:2613px;top:1728.0px;" width="14" height="26" viewBox="0 0 14 26"><path d="M2.5,24.5 L11.5,1.5" stroke="#e5e7eb" stroke-width="2.6"/></svg>
<div style="position:absolute;left:2635.5px;top:1728.3px;font-size:28px;line-height:28px;font-weight:400;color:#e5e7eb;white-space:pre;transform:scaleX(0.86);transform-origin:0 0;-webkit-text-stroke:0.3px #e5e7eb;">12</div>
<div style="position:absolute;left:2781.0px;top:1728.3px;font-size:28px;line-height:28px;font-weight:400;color:#e5e7eb;white-space:pre;-webkit-text-stroke:0.3px #e5e7eb;">95</div>
<div style="position:absolute;left:3099px;top:1729.6000000000001px;width:6px;height:6px;background:#e5e7eb;border-radius:50%"></div>
<div style="position:absolute;left:3099px;top:1740.7500000000002px;width:6px;height:6px;background:#e5e7eb;border-radius:50%"></div>
<div style="position:absolute;left:3099px;top:1751.9px;width:6px;height:6px;background:#e5e7eb;border-radius:50%"></div>
<div style="position:absolute;left:1184px;top:1832px;width:84px;height:84px;background:#314055;border-radius:50%"></div>
<div style="position:absolute;left:1217.0px;top:1858.6px;font-size:30px;line-height:30px;font-weight:400;color:#e5e7eb;white-space:pre;-webkit-text-stroke:0.4px #e5e7eb;">1</div>
<div style="position:absolute;left:1308.0px;top:1858.6px;font-size:30px;line-height:30px;font-weight:400;color:#b9bdc4;white-space:pre;-webkit-text-stroke:0.4px #b9bdc4;">2</div>
<div style="position:absolute;left:1401.0px;top:1858.6px;font-size:30px;line-height:30px;font-weight:400;color:#b9bdc4;white-space:pre;-webkit-text-stroke:0.4px #b9bdc4;">3</div>
<div style="position:absolute;left:1492.0px;top:1858.6px;font-size:30px;line-height:30px;font-weight:400;color:#b9bdc4;white-space:pre;-webkit-text-stroke:0.4px #b9bdc4;">4</div>
<div style="position:absolute;left:1585.0px;top:1858.6px;font-size:30px;line-height:30px;font-weight:400;color:#b9bdc4;white-space:pre;-webkit-text-stroke:0.4px #b9bdc4;">5</div>
<svg style="position:absolute;left:1026px;top:1860px;" width="32" height="28" viewBox="0 0 32 28"><path d="M15,6 L7,14 L15,22" fill="none" stroke="#686f7c" stroke-width="2.6"/><path d="M25,6 L17,14 L25,22" fill="none" stroke="#686f7c" stroke-width="2.6"/></svg>
<svg style="position:absolute;left:1118px;top:1860px;" width="32" height="28" viewBox="0 0 32 28"><path d="M20,6 L12,14 L20,22" fill="none" stroke="#686f7c" stroke-width="2.6"/></svg>
<svg style="position:absolute;left:1670px;top:1860px;" width="32" height="28" viewBox="0 0 32 28"><path d="M12,6 L20,14 L12,22" fill="none" stroke="#b9bdc4" stroke-width="2.6"/></svg>
<svg style="position:absolute;left:1762px;top:1860px;" width="32" height="28" viewBox="0 0 32 28"><path d="M7,6 L15,14 L7,22" fill="none" stroke="#b9bdc4" stroke-width="2.6"/><path d="M17,6 L25,14 L17,22" fill="none" stroke="#b9bdc4" stroke-width="2.6"/></svg>
<div style="position:absolute;left:2757.9px;top:1861.2px;font-size:30px;line-height:30px;font-weight:400;color:#a4a9b1;white-space:pre;-webkit-text-stroke:0.3px #a4a9b1;">Total </div>
<div style="position:absolute;left:2829.9px;top:1861.2px;font-size:30px;line-height:30px;font-weight:700;color:#a4a9b1;white-space:pre;letter-spacing:1.12px;">1334</div>
<div style="position:absolute;left:2907.9px;top:1861.2px;font-size:30px;line-height:30px;font-weight:400;color:#a4a9b1;white-space:pre;letter-spacing:-0.22px;-webkit-text-stroke:0.3px #a4a9b1;">Discovery Scores</div>
</body></html>
